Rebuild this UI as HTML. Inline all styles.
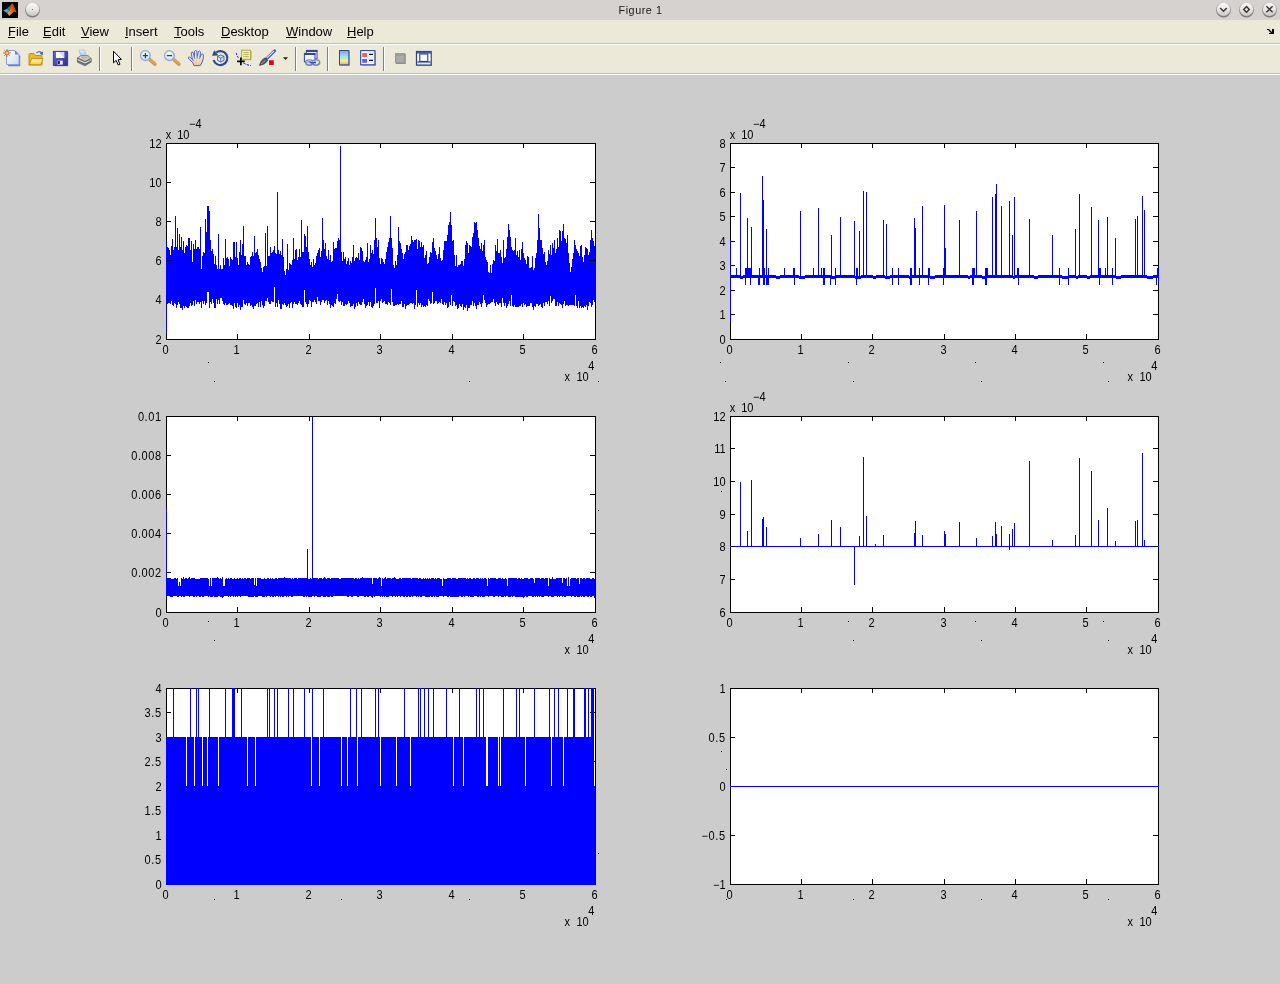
<!DOCTYPE html>
<html><head><meta charset="utf-8"><title>Figure 1</title>
<style>
html,body{margin:0;padding:0;}
body{width:1280px;height:984px;background:#cccccc;overflow:hidden;position:relative;font-family:"Liberation Sans",sans-serif;}
svg.plots{position:absolute;left:0;top:0;}
svg.plots text{font-family:"Liberation Sans",sans-serif;}
#titlebar{position:absolute;left:0;top:0;width:1280px;height:20px;background:#d6d2d0;}
#menubar{position:absolute;left:0;top:20px;width:1280px;height:23px;background:#ece9d8;}
#sep1{position:absolute;left:0;top:43px;width:1280px;height:1px;background:#c3c2b1;}
#sep1b{position:absolute;left:0;top:44px;width:1280px;height:1px;background:#ffffff;}
#toolbar{position:absolute;left:0;top:45px;width:1280px;height:28px;background:#ece9d8;}
#sep2{position:absolute;left:0;top:73px;width:1280px;height:1px;background:#c3c2b1;}
#sep2b{position:absolute;left:0;top:74px;width:1280px;height:1px;background:#ffffff;}
svg.icons{position:absolute;left:0;top:0;}

</style></head>
<body>
<svg class="plots" width="1280" height="984" viewBox="0 0 1280 984" shape-rendering="crispEdges"><rect x="166" y="143" width="430" height="197" fill="#fff"/><rect x="167" y="247" width="1" height="57" fill="#0000ff"/><rect x="168" y="248" width="1" height="55" fill="#0000ff"/><rect x="169" y="250" width="1" height="53" fill="#0000ff"/><rect x="170" y="255" width="1" height="49" fill="#0000ff"/><rect x="171" y="246" width="1" height="55" fill="#0000ff"/><rect x="172" y="239" width="1" height="66" fill="#0000ff"/><rect x="173" y="250" width="1" height="56" fill="#0000ff"/><rect x="174" y="247" width="1" height="56" fill="#0000ff"/><rect x="175" y="216" width="1" height="88" fill="#0000ff"/><rect x="176" y="247" width="1" height="61" fill="#0000ff"/><rect x="177" y="228" width="1" height="77" fill="#0000ff"/><rect x="178" y="250" width="1" height="52" fill="#0000ff"/><rect x="179" y="234" width="1" height="70" fill="#0000ff"/><rect x="180" y="247" width="1" height="61" fill="#0000ff"/><rect x="181" y="237" width="1" height="71" fill="#0000ff"/><rect x="182" y="250" width="1" height="60" fill="#0000ff"/><rect x="183" y="241" width="1" height="65" fill="#0000ff"/><rect x="184" y="253" width="1" height="55" fill="#0000ff"/><rect x="185" y="247" width="1" height="59" fill="#0000ff"/><rect x="186" y="245" width="1" height="62" fill="#0000ff"/><rect x="187" y="246" width="1" height="62" fill="#0000ff"/><rect x="188" y="238" width="1" height="70" fill="#0000ff"/><rect x="189" y="238" width="1" height="68" fill="#0000ff"/><rect x="190" y="250" width="1" height="53" fill="#0000ff"/><rect x="191" y="241" width="1" height="65" fill="#0000ff"/><rect x="192" y="262" width="1" height="43" fill="#0000ff"/><rect x="193" y="244" width="1" height="57" fill="#0000ff"/><rect x="194" y="249" width="1" height="57" fill="#0000ff"/><rect x="195" y="240" width="1" height="60" fill="#0000ff"/><rect x="196" y="249" width="1" height="55" fill="#0000ff"/><rect x="197" y="247" width="1" height="55" fill="#0000ff"/><rect x="198" y="247" width="1" height="55" fill="#0000ff"/><rect x="199" y="249" width="1" height="55" fill="#0000ff"/><rect x="200" y="227" width="1" height="75" fill="#0000ff"/><rect x="201" y="269" width="1" height="39" fill="#0000ff"/><rect x="202" y="256" width="1" height="45" fill="#0000ff"/><rect x="203" y="252" width="1" height="52" fill="#0000ff"/><rect x="204" y="253" width="1" height="48" fill="#0000ff"/><rect x="205" y="219" width="1" height="86" fill="#0000ff"/><rect x="206" y="232" width="1" height="71" fill="#0000ff"/><rect x="207" y="206" width="1" height="86" fill="#0000ff"/><rect x="208" y="206" width="1" height="86" fill="#0000ff"/><rect x="209" y="211" width="1" height="97" fill="#0000ff"/><rect x="210" y="240" width="1" height="62" fill="#0000ff"/><rect x="211" y="251" width="1" height="53" fill="#0000ff"/><rect x="212" y="249" width="1" height="50" fill="#0000ff"/><rect x="213" y="254" width="1" height="49" fill="#0000ff"/><rect x="214" y="264" width="1" height="44" fill="#0000ff"/><rect x="215" y="256" width="1" height="52" fill="#0000ff"/><rect x="216" y="265" width="1" height="34" fill="#0000ff"/><rect x="217" y="269" width="1" height="35" fill="#0000ff"/><rect x="218" y="234" width="1" height="66" fill="#0000ff"/><rect x="219" y="269" width="1" height="35" fill="#0000ff"/><rect x="220" y="265" width="1" height="33" fill="#0000ff"/><rect x="221" y="269" width="1" height="29" fill="#0000ff"/><rect x="222" y="269" width="1" height="32" fill="#0000ff"/><rect x="223" y="258" width="1" height="46" fill="#0000ff"/><rect x="224" y="265" width="1" height="40" fill="#0000ff"/><rect x="225" y="239" width="1" height="64" fill="#0000ff"/><rect x="226" y="258" width="1" height="47" fill="#0000ff"/><rect x="227" y="257" width="1" height="48" fill="#0000ff"/><rect x="228" y="259" width="1" height="45" fill="#0000ff"/><rect x="229" y="266" width="1" height="37" fill="#0000ff"/><rect x="230" y="257" width="1" height="48" fill="#0000ff"/><rect x="231" y="259" width="1" height="46" fill="#0000ff"/><rect x="232" y="260" width="1" height="46" fill="#0000ff"/><rect x="233" y="242" width="1" height="67" fill="#0000ff"/><rect x="234" y="242" width="1" height="61" fill="#0000ff"/><rect x="235" y="257" width="1" height="50" fill="#0000ff"/><rect x="236" y="242" width="1" height="66" fill="#0000ff"/><rect x="237" y="258" width="1" height="45" fill="#0000ff"/><rect x="238" y="265" width="1" height="42" fill="#0000ff"/><rect x="239" y="252" width="1" height="53" fill="#0000ff"/><rect x="240" y="240" width="1" height="70" fill="#0000ff"/><rect x="241" y="255" width="1" height="52" fill="#0000ff"/><rect x="242" y="244" width="1" height="63" fill="#0000ff"/><rect x="243" y="226" width="1" height="74" fill="#0000ff"/><rect x="244" y="256" width="1" height="48" fill="#0000ff"/><rect x="245" y="256" width="1" height="49" fill="#0000ff"/><rect x="246" y="265" width="1" height="38" fill="#0000ff"/><rect x="247" y="262" width="1" height="44" fill="#0000ff"/><rect x="248" y="264" width="1" height="39" fill="#0000ff"/><rect x="249" y="265" width="1" height="38" fill="#0000ff"/><rect x="250" y="257" width="1" height="49" fill="#0000ff"/><rect x="251" y="256" width="1" height="49" fill="#0000ff"/><rect x="252" y="252" width="1" height="55" fill="#0000ff"/><rect x="253" y="256" width="1" height="53" fill="#0000ff"/><rect x="254" y="236" width="1" height="70" fill="#0000ff"/><rect x="255" y="253" width="1" height="53" fill="#0000ff"/><rect x="256" y="252" width="1" height="52" fill="#0000ff"/><rect x="257" y="249" width="1" height="54" fill="#0000ff"/><rect x="258" y="255" width="1" height="52" fill="#0000ff"/><rect x="259" y="259" width="1" height="43" fill="#0000ff"/><rect x="260" y="262" width="1" height="45" fill="#0000ff"/><rect x="261" y="268" width="1" height="33" fill="#0000ff"/><rect x="262" y="272" width="1" height="33" fill="#0000ff"/><rect x="263" y="267" width="1" height="41" fill="#0000ff"/><rect x="264" y="266" width="1" height="40" fill="#0000ff"/><rect x="265" y="233" width="1" height="68" fill="#0000ff"/><rect x="266" y="266" width="1" height="35" fill="#0000ff"/><rect x="267" y="226" width="1" height="72" fill="#0000ff"/><rect x="268" y="256" width="1" height="46" fill="#0000ff"/><rect x="269" y="256" width="1" height="48" fill="#0000ff"/><rect x="270" y="247" width="1" height="57" fill="#0000ff"/><rect x="271" y="253" width="1" height="48" fill="#0000ff"/><rect x="272" y="252" width="1" height="50" fill="#0000ff"/><rect x="273" y="250" width="1" height="52" fill="#0000ff"/><rect x="274" y="246" width="1" height="41" fill="#0000ff"/><rect x="275" y="253" width="1" height="54" fill="#0000ff"/><rect x="276" y="254" width="1" height="49" fill="#0000ff"/><rect x="277" y="192" width="1" height="115" fill="#0000ff"/><rect x="278" y="250" width="1" height="50" fill="#0000ff"/><rect x="279" y="254" width="1" height="50" fill="#0000ff"/><rect x="280" y="251" width="1" height="58" fill="#0000ff"/><rect x="281" y="255" width="1" height="54" fill="#0000ff"/><rect x="282" y="239" width="1" height="65" fill="#0000ff"/><rect x="283" y="257" width="1" height="48" fill="#0000ff"/><rect x="284" y="271" width="1" height="32" fill="#0000ff"/><rect x="285" y="275" width="1" height="30" fill="#0000ff"/><rect x="286" y="269" width="1" height="38" fill="#0000ff"/><rect x="287" y="244" width="1" height="62" fill="#0000ff"/><rect x="288" y="270" width="1" height="34" fill="#0000ff"/><rect x="289" y="263" width="1" height="45" fill="#0000ff"/><rect x="290" y="264" width="1" height="39" fill="#0000ff"/><rect x="291" y="265" width="1" height="37" fill="#0000ff"/><rect x="292" y="260" width="1" height="48" fill="#0000ff"/><rect x="293" y="238" width="1" height="66" fill="#0000ff"/><rect x="294" y="259" width="1" height="43" fill="#0000ff"/><rect x="295" y="250" width="1" height="54" fill="#0000ff"/><rect x="296" y="249" width="1" height="55" fill="#0000ff"/><rect x="297" y="260" width="1" height="45" fill="#0000ff"/><rect x="298" y="257" width="1" height="46" fill="#0000ff"/><rect x="299" y="249" width="1" height="52" fill="#0000ff"/><rect x="300" y="257" width="1" height="47" fill="#0000ff"/><rect x="301" y="220" width="1" height="85" fill="#0000ff"/><rect x="302" y="252" width="1" height="55" fill="#0000ff"/><rect x="303" y="252" width="1" height="55" fill="#0000ff"/><rect x="304" y="234" width="1" height="56" fill="#0000ff"/><rect x="305" y="236" width="1" height="66" fill="#0000ff"/><rect x="306" y="247" width="1" height="57" fill="#0000ff"/><rect x="307" y="226" width="1" height="81" fill="#0000ff"/><rect x="308" y="252" width="1" height="52" fill="#0000ff"/><rect x="309" y="259" width="1" height="41" fill="#0000ff"/><rect x="310" y="265" width="1" height="36" fill="#0000ff"/><rect x="311" y="262" width="1" height="45" fill="#0000ff"/><rect x="312" y="267" width="1" height="35" fill="#0000ff"/><rect x="313" y="259" width="1" height="43" fill="#0000ff"/><rect x="314" y="265" width="1" height="35" fill="#0000ff"/><rect x="315" y="263" width="1" height="39" fill="#0000ff"/><rect x="316" y="256" width="1" height="48" fill="#0000ff"/><rect x="317" y="253" width="1" height="44" fill="#0000ff"/><rect x="318" y="250" width="1" height="51" fill="#0000ff"/><rect x="319" y="248" width="1" height="53" fill="#0000ff"/><rect x="320" y="257" width="1" height="48" fill="#0000ff"/><rect x="321" y="251" width="1" height="51" fill="#0000ff"/><rect x="322" y="218" width="1" height="82" fill="#0000ff"/><rect x="323" y="240" width="1" height="60" fill="#0000ff"/><rect x="324" y="249" width="1" height="54" fill="#0000ff"/><rect x="325" y="243" width="1" height="58" fill="#0000ff"/><rect x="326" y="256" width="1" height="44" fill="#0000ff"/><rect x="327" y="259" width="1" height="46" fill="#0000ff"/><rect x="328" y="250" width="1" height="51" fill="#0000ff"/><rect x="329" y="260" width="1" height="44" fill="#0000ff"/><rect x="330" y="255" width="1" height="53" fill="#0000ff"/><rect x="331" y="262" width="1" height="43" fill="#0000ff"/><rect x="332" y="261" width="1" height="45" fill="#0000ff"/><rect x="333" y="242" width="1" height="65" fill="#0000ff"/><rect x="334" y="249" width="1" height="54" fill="#0000ff"/><rect x="335" y="248" width="1" height="56" fill="#0000ff"/><rect x="336" y="248" width="1" height="51" fill="#0000ff"/><rect x="337" y="241" width="1" height="53" fill="#0000ff"/><rect x="338" y="238" width="1" height="63" fill="#0000ff"/><rect x="339" y="240" width="1" height="62" fill="#0000ff"/><rect x="340" y="146" width="1" height="155" fill="#0000ff"/><rect x="341" y="252" width="1" height="53" fill="#0000ff"/><rect x="342" y="261" width="1" height="41" fill="#0000ff"/><rect x="343" y="252" width="1" height="54" fill="#0000ff"/><rect x="344" y="259" width="1" height="47" fill="#0000ff"/><rect x="345" y="257" width="1" height="47" fill="#0000ff"/><rect x="346" y="264" width="1" height="41" fill="#0000ff"/><rect x="347" y="261" width="1" height="43" fill="#0000ff"/><rect x="348" y="258" width="1" height="43" fill="#0000ff"/><rect x="349" y="265" width="1" height="38" fill="#0000ff"/><rect x="350" y="261" width="1" height="46" fill="#0000ff"/><rect x="351" y="263" width="1" height="43" fill="#0000ff"/><rect x="352" y="257" width="1" height="49" fill="#0000ff"/><rect x="353" y="245" width="1" height="59" fill="#0000ff"/><rect x="354" y="261" width="1" height="48" fill="#0000ff"/><rect x="355" y="258" width="1" height="49" fill="#0000ff"/><rect x="356" y="257" width="1" height="46" fill="#0000ff"/><rect x="357" y="258" width="1" height="48" fill="#0000ff"/><rect x="358" y="253" width="1" height="49" fill="#0000ff"/><rect x="359" y="260" width="1" height="44" fill="#0000ff"/><rect x="360" y="247" width="1" height="58" fill="#0000ff"/><rect x="361" y="248" width="1" height="57" fill="#0000ff"/><rect x="362" y="251" width="1" height="51" fill="#0000ff"/><rect x="363" y="261" width="1" height="38" fill="#0000ff"/><rect x="364" y="262" width="1" height="42" fill="#0000ff"/><rect x="365" y="260" width="1" height="48" fill="#0000ff"/><rect x="366" y="257" width="1" height="49" fill="#0000ff"/><rect x="367" y="243" width="1" height="62" fill="#0000ff"/><rect x="368" y="262" width="1" height="40" fill="#0000ff"/><rect x="369" y="259" width="1" height="47" fill="#0000ff"/><rect x="370" y="245" width="1" height="57" fill="#0000ff"/><rect x="371" y="253" width="1" height="54" fill="#0000ff"/><rect x="372" y="250" width="1" height="58" fill="#0000ff"/><rect x="373" y="254" width="1" height="52" fill="#0000ff"/><rect x="374" y="240" width="1" height="64" fill="#0000ff"/><rect x="375" y="218" width="1" height="70" fill="#0000ff"/><rect x="376" y="238" width="1" height="65" fill="#0000ff"/><rect x="377" y="247" width="1" height="56" fill="#0000ff"/><rect x="378" y="240" width="1" height="61" fill="#0000ff"/><rect x="379" y="258" width="1" height="50" fill="#0000ff"/><rect x="380" y="264" width="1" height="37" fill="#0000ff"/><rect x="381" y="258" width="1" height="41" fill="#0000ff"/><rect x="382" y="259" width="1" height="44" fill="#0000ff"/><rect x="383" y="262" width="1" height="40" fill="#0000ff"/><rect x="384" y="264" width="1" height="37" fill="#0000ff"/><rect x="385" y="259" width="1" height="45" fill="#0000ff"/><rect x="386" y="252" width="1" height="52" fill="#0000ff"/><rect x="387" y="247" width="1" height="58" fill="#0000ff"/><rect x="388" y="242" width="1" height="60" fill="#0000ff"/><rect x="389" y="238" width="1" height="65" fill="#0000ff"/><rect x="390" y="216" width="1" height="89" fill="#0000ff"/><rect x="391" y="238" width="1" height="51" fill="#0000ff"/><rect x="392" y="248" width="1" height="54" fill="#0000ff"/><rect x="393" y="265" width="1" height="41" fill="#0000ff"/><rect x="394" y="268" width="1" height="38" fill="#0000ff"/><rect x="395" y="261" width="1" height="44" fill="#0000ff"/><rect x="396" y="265" width="1" height="40" fill="#0000ff"/><rect x="397" y="255" width="1" height="49" fill="#0000ff"/><rect x="398" y="227" width="1" height="78" fill="#0000ff"/><rect x="399" y="241" width="1" height="63" fill="#0000ff"/><rect x="400" y="243" width="1" height="61" fill="#0000ff"/><rect x="401" y="249" width="1" height="52" fill="#0000ff"/><rect x="402" y="253" width="1" height="54" fill="#0000ff"/><rect x="403" y="259" width="1" height="48" fill="#0000ff"/><rect x="404" y="254" width="1" height="50" fill="#0000ff"/><rect x="405" y="252" width="1" height="57" fill="#0000ff"/><rect x="406" y="245" width="1" height="61" fill="#0000ff"/><rect x="407" y="245" width="1" height="60" fill="#0000ff"/><rect x="408" y="250" width="1" height="55" fill="#0000ff"/><rect x="409" y="246" width="1" height="58" fill="#0000ff"/><rect x="410" y="244" width="1" height="59" fill="#0000ff"/><rect x="411" y="236" width="1" height="67" fill="#0000ff"/><rect x="412" y="240" width="1" height="64" fill="#0000ff"/><rect x="413" y="242" width="1" height="61" fill="#0000ff"/><rect x="414" y="240" width="1" height="69" fill="#0000ff"/><rect x="415" y="240" width="1" height="65" fill="#0000ff"/><rect x="416" y="239" width="1" height="51" fill="#0000ff"/><rect x="417" y="249" width="1" height="58" fill="#0000ff"/><rect x="418" y="240" width="1" height="63" fill="#0000ff"/><rect x="419" y="241" width="1" height="64" fill="#0000ff"/><rect x="420" y="247" width="1" height="56" fill="#0000ff"/><rect x="421" y="242" width="1" height="65" fill="#0000ff"/><rect x="422" y="247" width="1" height="58" fill="#0000ff"/><rect x="423" y="245" width="1" height="62" fill="#0000ff"/><rect x="424" y="258" width="1" height="48" fill="#0000ff"/><rect x="425" y="255" width="1" height="52" fill="#0000ff"/><rect x="426" y="251" width="1" height="54" fill="#0000ff"/><rect x="427" y="264" width="1" height="42" fill="#0000ff"/><rect x="428" y="263" width="1" height="36" fill="#0000ff"/><rect x="429" y="257" width="1" height="44" fill="#0000ff"/><rect x="430" y="252" width="1" height="52" fill="#0000ff"/><rect x="431" y="253" width="1" height="50" fill="#0000ff"/><rect x="432" y="242" width="1" height="50" fill="#0000ff"/><rect x="433" y="238" width="1" height="66" fill="#0000ff"/><rect x="434" y="248" width="1" height="55" fill="#0000ff"/><rect x="435" y="251" width="1" height="50" fill="#0000ff"/><rect x="436" y="255" width="1" height="46" fill="#0000ff"/><rect x="437" y="259" width="1" height="45" fill="#0000ff"/><rect x="438" y="254" width="1" height="49" fill="#0000ff"/><rect x="439" y="247" width="1" height="55" fill="#0000ff"/><rect x="440" y="258" width="1" height="45" fill="#0000ff"/><rect x="441" y="261" width="1" height="38" fill="#0000ff"/><rect x="442" y="260" width="1" height="44" fill="#0000ff"/><rect x="443" y="250" width="1" height="55" fill="#0000ff"/><rect x="444" y="241" width="1" height="61" fill="#0000ff"/><rect x="445" y="241" width="1" height="64" fill="#0000ff"/><rect x="446" y="241" width="1" height="62" fill="#0000ff"/><rect x="447" y="235" width="1" height="73" fill="#0000ff"/><rect x="448" y="225" width="1" height="82" fill="#0000ff"/><rect x="449" y="222" width="1" height="80" fill="#0000ff"/><rect x="450" y="212" width="1" height="93" fill="#0000ff"/><rect x="451" y="225" width="1" height="70" fill="#0000ff"/><rect x="452" y="241" width="1" height="65" fill="#0000ff"/><rect x="453" y="240" width="1" height="61" fill="#0000ff"/><rect x="454" y="255" width="1" height="47" fill="#0000ff"/><rect x="455" y="266" width="1" height="40" fill="#0000ff"/><rect x="456" y="255" width="1" height="50" fill="#0000ff"/><rect x="457" y="267" width="1" height="42" fill="#0000ff"/><rect x="458" y="265" width="1" height="43" fill="#0000ff"/><rect x="459" y="265" width="1" height="39" fill="#0000ff"/><rect x="460" y="264" width="1" height="42" fill="#0000ff"/><rect x="461" y="261" width="1" height="46" fill="#0000ff"/><rect x="462" y="261" width="1" height="43" fill="#0000ff"/><rect x="463" y="266" width="1" height="44" fill="#0000ff"/><rect x="464" y="259" width="1" height="48" fill="#0000ff"/><rect x="465" y="245" width="1" height="63" fill="#0000ff"/><rect x="466" y="241" width="1" height="64" fill="#0000ff"/><rect x="467" y="243" width="1" height="68" fill="#0000ff"/><rect x="468" y="253" width="1" height="55" fill="#0000ff"/><rect x="469" y="245" width="1" height="63" fill="#0000ff"/><rect x="470" y="246" width="1" height="59" fill="#0000ff"/><rect x="471" y="247" width="1" height="58" fill="#0000ff"/><rect x="472" y="237" width="1" height="64" fill="#0000ff"/><rect x="473" y="233" width="1" height="73" fill="#0000ff"/><rect x="474" y="222" width="1" height="81" fill="#0000ff"/><rect x="475" y="223" width="1" height="83" fill="#0000ff"/><rect x="476" y="222" width="1" height="87" fill="#0000ff"/><rect x="477" y="230" width="1" height="75" fill="#0000ff"/><rect x="478" y="238" width="1" height="67" fill="#0000ff"/><rect x="479" y="246" width="1" height="56" fill="#0000ff"/><rect x="480" y="249" width="1" height="55" fill="#0000ff"/><rect x="481" y="243" width="1" height="64" fill="#0000ff"/><rect x="482" y="251" width="1" height="52" fill="#0000ff"/><rect x="483" y="245" width="1" height="50" fill="#0000ff"/><rect x="484" y="240" width="1" height="60" fill="#0000ff"/><rect x="485" y="257" width="1" height="46" fill="#0000ff"/><rect x="486" y="260" width="1" height="47" fill="#0000ff"/><rect x="487" y="262" width="1" height="43" fill="#0000ff"/><rect x="488" y="272" width="1" height="32" fill="#0000ff"/><rect x="489" y="273" width="1" height="31" fill="#0000ff"/><rect x="490" y="265" width="1" height="38" fill="#0000ff"/><rect x="491" y="273" width="1" height="29" fill="#0000ff"/><rect x="492" y="264" width="1" height="38" fill="#0000ff"/><rect x="493" y="260" width="1" height="39" fill="#0000ff"/><rect x="494" y="261" width="1" height="42" fill="#0000ff"/><rect x="495" y="245" width="1" height="61" fill="#0000ff"/><rect x="496" y="251" width="1" height="51" fill="#0000ff"/><rect x="497" y="239" width="1" height="65" fill="#0000ff"/><rect x="498" y="253" width="1" height="52" fill="#0000ff"/><rect x="499" y="253" width="1" height="50" fill="#0000ff"/><rect x="500" y="250" width="1" height="53" fill="#0000ff"/><rect x="501" y="257" width="1" height="50" fill="#0000ff"/><rect x="502" y="263" width="1" height="35" fill="#0000ff"/><rect x="503" y="240" width="1" height="63" fill="#0000ff"/><rect x="504" y="258" width="1" height="48" fill="#0000ff"/><rect x="505" y="257" width="1" height="46" fill="#0000ff"/><rect x="506" y="249" width="1" height="59" fill="#0000ff"/><rect x="507" y="237" width="1" height="69" fill="#0000ff"/><rect x="508" y="224" width="1" height="80" fill="#0000ff"/><rect x="509" y="230" width="1" height="71" fill="#0000ff"/><rect x="510" y="237" width="1" height="69" fill="#0000ff"/><rect x="511" y="247" width="1" height="48" fill="#0000ff"/><rect x="512" y="250" width="1" height="56" fill="#0000ff"/><rect x="513" y="251" width="1" height="56" fill="#0000ff"/><rect x="514" y="250" width="1" height="55" fill="#0000ff"/><rect x="515" y="238" width="1" height="69" fill="#0000ff"/><rect x="516" y="255" width="1" height="52" fill="#0000ff"/><rect x="517" y="251" width="1" height="56" fill="#0000ff"/><rect x="518" y="257" width="1" height="50" fill="#0000ff"/><rect x="519" y="250" width="1" height="56" fill="#0000ff"/><rect x="520" y="260" width="1" height="46" fill="#0000ff"/><rect x="521" y="249" width="1" height="55" fill="#0000ff"/><rect x="522" y="242" width="1" height="65" fill="#0000ff"/><rect x="523" y="253" width="1" height="50" fill="#0000ff"/><rect x="524" y="258" width="1" height="47" fill="#0000ff"/><rect x="525" y="260" width="1" height="44" fill="#0000ff"/><rect x="526" y="264" width="1" height="43" fill="#0000ff"/><rect x="527" y="256" width="1" height="50" fill="#0000ff"/><rect x="528" y="257" width="1" height="49" fill="#0000ff"/><rect x="529" y="268" width="1" height="38" fill="#0000ff"/><rect x="530" y="268" width="1" height="35" fill="#0000ff"/><rect x="531" y="267" width="1" height="36" fill="#0000ff"/><rect x="532" y="256" width="1" height="51" fill="#0000ff"/><rect x="533" y="270" width="1" height="40" fill="#0000ff"/><rect x="534" y="268" width="1" height="38" fill="#0000ff"/><rect x="535" y="258" width="1" height="49" fill="#0000ff"/><rect x="536" y="253" width="1" height="51" fill="#0000ff"/><rect x="537" y="240" width="1" height="64" fill="#0000ff"/><rect x="538" y="214" width="1" height="92" fill="#0000ff"/><rect x="539" y="228" width="1" height="77" fill="#0000ff"/><rect x="540" y="240" width="1" height="64" fill="#0000ff"/><rect x="541" y="240" width="1" height="67" fill="#0000ff"/><rect x="542" y="248" width="1" height="60" fill="#0000ff"/><rect x="543" y="254" width="1" height="49" fill="#0000ff"/><rect x="544" y="252" width="1" height="54" fill="#0000ff"/><rect x="545" y="262" width="1" height="40" fill="#0000ff"/><rect x="546" y="265" width="1" height="37" fill="#0000ff"/><rect x="547" y="261" width="1" height="43" fill="#0000ff"/><rect x="548" y="250" width="1" height="51" fill="#0000ff"/><rect x="549" y="254" width="1" height="52" fill="#0000ff"/><rect x="550" y="245" width="1" height="51" fill="#0000ff"/><rect x="551" y="255" width="1" height="48" fill="#0000ff"/><rect x="552" y="243" width="1" height="58" fill="#0000ff"/><rect x="553" y="248" width="1" height="51" fill="#0000ff"/><rect x="554" y="240" width="1" height="59" fill="#0000ff"/><rect x="555" y="253" width="1" height="53" fill="#0000ff"/><rect x="556" y="249" width="1" height="57" fill="#0000ff"/><rect x="557" y="238" width="1" height="64" fill="#0000ff"/><rect x="558" y="247" width="1" height="59" fill="#0000ff"/><rect x="559" y="230" width="1" height="73" fill="#0000ff"/><rect x="560" y="231" width="1" height="73" fill="#0000ff"/><rect x="561" y="241" width="1" height="64" fill="#0000ff"/><rect x="562" y="231" width="1" height="77" fill="#0000ff"/><rect x="563" y="224" width="1" height="80" fill="#0000ff"/><rect x="564" y="238" width="1" height="63" fill="#0000ff"/><rect x="565" y="239" width="1" height="67" fill="#0000ff"/><rect x="566" y="243" width="1" height="62" fill="#0000ff"/><rect x="567" y="235" width="1" height="70" fill="#0000ff"/><rect x="568" y="253" width="1" height="53" fill="#0000ff"/><rect x="569" y="263" width="1" height="42" fill="#0000ff"/><rect x="570" y="272" width="1" height="33" fill="#0000ff"/><rect x="571" y="267" width="1" height="38" fill="#0000ff"/><rect x="572" y="259" width="1" height="46" fill="#0000ff"/><rect x="573" y="253" width="1" height="52" fill="#0000ff"/><rect x="574" y="240" width="1" height="66" fill="#0000ff"/><rect x="575" y="245" width="1" height="50" fill="#0000ff"/><rect x="576" y="249" width="1" height="57" fill="#0000ff"/><rect x="577" y="251" width="1" height="57" fill="#0000ff"/><rect x="578" y="253" width="1" height="48" fill="#0000ff"/><rect x="579" y="256" width="1" height="52" fill="#0000ff"/><rect x="580" y="246" width="1" height="60" fill="#0000ff"/><rect x="581" y="245" width="1" height="63" fill="#0000ff"/><rect x="582" y="257" width="1" height="50" fill="#0000ff"/><rect x="583" y="262" width="1" height="46" fill="#0000ff"/><rect x="584" y="255" width="1" height="51" fill="#0000ff"/><rect x="585" y="247" width="1" height="60" fill="#0000ff"/><rect x="586" y="248" width="1" height="57" fill="#0000ff"/><rect x="587" y="249" width="1" height="61" fill="#0000ff"/><rect x="588" y="255" width="1" height="51" fill="#0000ff"/><rect x="589" y="252" width="1" height="50" fill="#0000ff"/><rect x="590" y="240" width="1" height="63" fill="#0000ff"/><rect x="591" y="230" width="1" height="77" fill="#0000ff"/><rect x="592" y="238" width="1" height="67" fill="#0000ff"/><rect x="593" y="241" width="1" height="59" fill="#0000ff"/><rect x="594" y="246" width="1" height="56" fill="#0000ff"/><rect x="166" y="143" width="430" height="1" fill="#000"/><rect x="166" y="339" width="430" height="1" fill="#000"/><rect x="166" y="143" width="1" height="197" fill="#000"/><rect x="595" y="143" width="1" height="197" fill="#000"/><rect x="237" y="334" width="1" height="5" fill="#000"/><rect x="237" y="144" width="1" height="4" fill="#000"/><rect x="309" y="334" width="1" height="5" fill="#000"/><rect x="309" y="144" width="1" height="4" fill="#000"/><rect x="380" y="334" width="1" height="5" fill="#000"/><rect x="380" y="144" width="1" height="4" fill="#000"/><rect x="452" y="334" width="1" height="5" fill="#000"/><rect x="452" y="144" width="1" height="4" fill="#000"/><rect x="523" y="334" width="1" height="5" fill="#000"/><rect x="523" y="144" width="1" height="4" fill="#000"/><rect x="167" y="299" width="4" height="1" fill="#000"/><rect x="590" y="299" width="5" height="1" fill="#000"/><rect x="167" y="260" width="4" height="1" fill="#000"/><rect x="590" y="260" width="5" height="1" fill="#000"/><rect x="167" y="221" width="4" height="1" fill="#000"/><rect x="590" y="221" width="5" height="1" fill="#000"/><rect x="167" y="182" width="4" height="1" fill="#000"/><rect x="590" y="182" width="5" height="1" fill="#000"/><rect x="166" y="242" width="1" height="92" fill="#0000ff"/><rect x="595" y="262" width="1" height="35" fill="#0000ff"/><rect x="730" y="143" width="429" height="197" fill="#fff"/><rect x="731" y="275" width="427" height="3" fill="#0000ff"/><rect x="740" y="275" width="3" height="1" fill="#fff"/><rect x="740" y="278" width="3" height="1" fill="#0000ff"/><rect x="776" y="275" width="4" height="1" fill="#fff"/><rect x="776" y="278" width="4" height="1" fill="#0000ff"/><rect x="799" y="275" width="6" height="1" fill="#fff"/><rect x="799" y="278" width="6" height="1" fill="#0000ff"/><rect x="831" y="275" width="4" height="1" fill="#fff"/><rect x="831" y="278" width="4" height="1" fill="#0000ff"/><rect x="855" y="275" width="6" height="1" fill="#fff"/><rect x="855" y="278" width="6" height="1" fill="#0000ff"/><rect x="873" y="275" width="3" height="1" fill="#fff"/><rect x="873" y="278" width="3" height="1" fill="#0000ff"/><rect x="885" y="275" width="5" height="1" fill="#fff"/><rect x="885" y="278" width="5" height="1" fill="#0000ff"/><rect x="909" y="275" width="2" height="1" fill="#fff"/><rect x="909" y="278" width="2" height="1" fill="#0000ff"/><rect x="930" y="275" width="5" height="1" fill="#fff"/><rect x="930" y="278" width="5" height="1" fill="#0000ff"/><rect x="968" y="275" width="2" height="1" fill="#fff"/><rect x="968" y="278" width="2" height="1" fill="#0000ff"/><rect x="982" y="275" width="4" height="1" fill="#fff"/><rect x="982" y="278" width="4" height="1" fill="#0000ff"/><rect x="1013" y="275" width="2" height="1" fill="#fff"/><rect x="1013" y="278" width="2" height="1" fill="#0000ff"/><rect x="1034" y="275" width="4" height="1" fill="#fff"/><rect x="1034" y="278" width="4" height="1" fill="#0000ff"/><rect x="1062" y="275" width="6" height="1" fill="#fff"/><rect x="1062" y="278" width="6" height="1" fill="#0000ff"/><rect x="1076" y="275" width="2" height="1" fill="#fff"/><rect x="1076" y="278" width="2" height="1" fill="#0000ff"/><rect x="1087" y="275" width="3" height="1" fill="#fff"/><rect x="1087" y="278" width="3" height="1" fill="#0000ff"/><rect x="1116" y="275" width="5" height="1" fill="#fff"/><rect x="1116" y="278" width="5" height="1" fill="#0000ff"/><rect x="1147" y="275" width="6" height="1" fill="#fff"/><rect x="1147" y="278" width="6" height="1" fill="#0000ff"/><rect x="740" y="193" width="1" height="85" fill="#0000ff"/><rect x="747" y="218" width="1" height="60" fill="#0000ff"/><rect x="751" y="227" width="1" height="51" fill="#0000ff"/><rect x="762" y="176" width="1" height="102" fill="#0000ff"/><rect x="763" y="200" width="1" height="78" fill="#0000ff"/><rect x="766" y="229" width="1" height="49" fill="#0000ff"/><rect x="800" y="211" width="1" height="67" fill="#0000ff"/><rect x="818" y="208" width="1" height="70" fill="#0000ff"/><rect x="831" y="235" width="1" height="43" fill="#0000ff"/><rect x="840" y="217" width="1" height="61" fill="#0000ff"/><rect x="854" y="221" width="1" height="57" fill="#0000ff"/><rect x="859" y="231" width="1" height="47" fill="#0000ff"/><rect x="863" y="191" width="1" height="87" fill="#0000ff"/><rect x="866" y="192" width="1" height="86" fill="#0000ff"/><rect x="883" y="220" width="1" height="58" fill="#0000ff"/><rect x="886" y="224" width="1" height="54" fill="#0000ff"/><rect x="914" y="218" width="1" height="60" fill="#0000ff"/><rect x="915" y="228" width="1" height="50" fill="#0000ff"/><rect x="922" y="206" width="1" height="72" fill="#0000ff"/><rect x="944" y="205" width="1" height="73" fill="#0000ff"/><rect x="945" y="248" width="1" height="30" fill="#0000ff"/><rect x="959" y="220" width="1" height="58" fill="#0000ff"/><rect x="976" y="211" width="1" height="67" fill="#0000ff"/><rect x="992" y="197" width="1" height="81" fill="#0000ff"/><rect x="995" y="194" width="1" height="84" fill="#0000ff"/><rect x="996" y="184" width="1" height="94" fill="#0000ff"/><rect x="1001" y="206" width="1" height="72" fill="#0000ff"/><rect x="1009" y="201" width="1" height="77" fill="#0000ff"/><rect x="1012" y="235" width="1" height="43" fill="#0000ff"/><rect x="1014" y="197" width="1" height="81" fill="#0000ff"/><rect x="1029" y="219" width="1" height="59" fill="#0000ff"/><rect x="1052" y="235" width="1" height="43" fill="#0000ff"/><rect x="1075" y="229" width="1" height="49" fill="#0000ff"/><rect x="1079" y="194" width="1" height="84" fill="#0000ff"/><rect x="1091" y="207" width="1" height="71" fill="#0000ff"/><rect x="1098" y="220" width="1" height="58" fill="#0000ff"/><rect x="1107" y="217" width="1" height="61" fill="#0000ff"/><rect x="1115" y="238" width="1" height="40" fill="#0000ff"/><rect x="1135" y="219" width="1" height="59" fill="#0000ff"/><rect x="1137" y="216" width="1" height="62" fill="#0000ff"/><rect x="1142" y="196" width="1" height="82" fill="#0000ff"/><rect x="1144" y="210" width="1" height="68" fill="#0000ff"/><rect x="736" y="268" width="1" height="10" fill="#0000ff"/><rect x="745" y="268" width="1" height="10" fill="#0000ff"/><rect x="746" y="268" width="1" height="10" fill="#0000ff"/><rect x="747" y="268" width="1" height="10" fill="#0000ff"/><rect x="748" y="268" width="1" height="10" fill="#0000ff"/><rect x="749" y="268" width="1" height="10" fill="#0000ff"/><rect x="750" y="268" width="1" height="10" fill="#0000ff"/><rect x="751" y="268" width="1" height="10" fill="#0000ff"/><rect x="759" y="268" width="1" height="10" fill="#0000ff"/><rect x="764" y="268" width="1" height="10" fill="#0000ff"/><rect x="768" y="268" width="1" height="10" fill="#0000ff"/><rect x="784" y="268" width="1" height="10" fill="#0000ff"/><rect x="793" y="268" width="1" height="10" fill="#0000ff"/><rect x="794" y="268" width="1" height="10" fill="#0000ff"/><rect x="813" y="268" width="1" height="10" fill="#0000ff"/><rect x="821" y="268" width="1" height="10" fill="#0000ff"/><rect x="823" y="268" width="1" height="10" fill="#0000ff"/><rect x="824" y="268" width="1" height="10" fill="#0000ff"/><rect x="835" y="268" width="1" height="10" fill="#0000ff"/><rect x="856" y="268" width="1" height="10" fill="#0000ff"/><rect x="857" y="268" width="1" height="10" fill="#0000ff"/><rect x="892" y="268" width="1" height="10" fill="#0000ff"/><rect x="898" y="268" width="1" height="10" fill="#0000ff"/><rect x="910" y="268" width="1" height="10" fill="#0000ff"/><rect x="911" y="268" width="1" height="10" fill="#0000ff"/><rect x="919" y="268" width="1" height="10" fill="#0000ff"/><rect x="928" y="268" width="1" height="10" fill="#0000ff"/><rect x="929" y="268" width="1" height="10" fill="#0000ff"/><rect x="943" y="268" width="1" height="10" fill="#0000ff"/><rect x="972" y="268" width="1" height="10" fill="#0000ff"/><rect x="973" y="268" width="1" height="10" fill="#0000ff"/><rect x="974" y="268" width="1" height="10" fill="#0000ff"/><rect x="985" y="268" width="1" height="10" fill="#0000ff"/><rect x="986" y="268" width="1" height="10" fill="#0000ff"/><rect x="987" y="268" width="1" height="10" fill="#0000ff"/><rect x="1017" y="268" width="1" height="10" fill="#0000ff"/><rect x="1018" y="268" width="1" height="10" fill="#0000ff"/><rect x="1059" y="268" width="1" height="10" fill="#0000ff"/><rect x="1068" y="268" width="1" height="10" fill="#0000ff"/><rect x="1099" y="268" width="1" height="10" fill="#0000ff"/><rect x="1100" y="268" width="1" height="10" fill="#0000ff"/><rect x="1105" y="268" width="1" height="10" fill="#0000ff"/><rect x="1112" y="268" width="1" height="10" fill="#0000ff"/><rect x="1157" y="268" width="1" height="10" fill="#0000ff"/><rect x="745" y="277" width="1" height="8" fill="#0000ff"/><rect x="750" y="277" width="1" height="8" fill="#0000ff"/><rect x="758" y="277" width="1" height="8" fill="#0000ff"/><rect x="759" y="277" width="1" height="8" fill="#0000ff"/><rect x="763" y="277" width="1" height="8" fill="#0000ff"/><rect x="764" y="277" width="1" height="8" fill="#0000ff"/><rect x="766" y="277" width="1" height="8" fill="#0000ff"/><rect x="767" y="277" width="1" height="8" fill="#0000ff"/><rect x="768" y="277" width="1" height="8" fill="#0000ff"/><rect x="794" y="277" width="1" height="8" fill="#0000ff"/><rect x="823" y="277" width="1" height="8" fill="#0000ff"/><rect x="824" y="277" width="1" height="8" fill="#0000ff"/><rect x="830" y="277" width="1" height="8" fill="#0000ff"/><rect x="835" y="277" width="1" height="8" fill="#0000ff"/><rect x="856" y="277" width="1" height="8" fill="#0000ff"/><rect x="892" y="277" width="1" height="8" fill="#0000ff"/><rect x="898" y="277" width="1" height="8" fill="#0000ff"/><rect x="910" y="277" width="1" height="8" fill="#0000ff"/><rect x="911" y="277" width="1" height="8" fill="#0000ff"/><rect x="919" y="277" width="1" height="8" fill="#0000ff"/><rect x="928" y="277" width="1" height="8" fill="#0000ff"/><rect x="943" y="277" width="1" height="8" fill="#0000ff"/><rect x="972" y="277" width="1" height="8" fill="#0000ff"/><rect x="973" y="277" width="1" height="8" fill="#0000ff"/><rect x="985" y="277" width="1" height="8" fill="#0000ff"/><rect x="986" y="277" width="1" height="8" fill="#0000ff"/><rect x="1018" y="277" width="1" height="8" fill="#0000ff"/><rect x="1059" y="277" width="1" height="8" fill="#0000ff"/><rect x="1068" y="277" width="1" height="8" fill="#0000ff"/><rect x="1099" y="277" width="1" height="8" fill="#0000ff"/><rect x="1112" y="277" width="1" height="8" fill="#0000ff"/><rect x="1156" y="277" width="1" height="8" fill="#0000ff"/><rect x="730" y="143" width="429" height="1" fill="#000"/><rect x="730" y="339" width="429" height="1" fill="#000"/><rect x="730" y="143" width="1" height="197" fill="#000"/><rect x="1158" y="143" width="1" height="197" fill="#000"/><rect x="801" y="334" width="1" height="5" fill="#000"/><rect x="801" y="144" width="1" height="4" fill="#000"/><rect x="872" y="334" width="1" height="5" fill="#000"/><rect x="872" y="144" width="1" height="4" fill="#000"/><rect x="944" y="334" width="1" height="5" fill="#000"/><rect x="944" y="144" width="1" height="4" fill="#000"/><rect x="1015" y="334" width="1" height="5" fill="#000"/><rect x="1015" y="144" width="1" height="4" fill="#000"/><rect x="1086" y="334" width="1" height="5" fill="#000"/><rect x="1086" y="144" width="1" height="4" fill="#000"/><rect x="731" y="314" width="4" height="1" fill="#000"/><rect x="1153" y="314" width="5" height="1" fill="#000"/><rect x="731" y="290" width="4" height="1" fill="#000"/><rect x="1153" y="290" width="5" height="1" fill="#000"/><rect x="731" y="265" width="4" height="1" fill="#000"/><rect x="1153" y="265" width="5" height="1" fill="#000"/><rect x="731" y="241" width="4" height="1" fill="#000"/><rect x="1153" y="241" width="5" height="1" fill="#000"/><rect x="731" y="216" width="4" height="1" fill="#000"/><rect x="1153" y="216" width="5" height="1" fill="#000"/><rect x="731" y="192" width="4" height="1" fill="#000"/><rect x="1153" y="192" width="5" height="1" fill="#000"/><rect x="731" y="167" width="4" height="1" fill="#000"/><rect x="1153" y="167" width="5" height="1" fill="#000"/><rect x="730" y="240" width="1" height="82" fill="#0000ff"/><rect x="1158" y="268" width="1" height="14" fill="#0000ff"/><rect x="166" y="416" width="430" height="197" fill="#fff"/><rect x="167" y="578" width="428" height="18" fill="#0000ff"/><rect x="170" y="595" width="1" height="2" fill="#0000ff"/><rect x="171" y="578" width="1" height="1" fill="#fff"/><rect x="171" y="595" width="1" height="2" fill="#0000ff"/><rect x="172" y="578" width="1" height="1" fill="#fff"/><rect x="172" y="595" width="1" height="2" fill="#0000ff"/><rect x="173" y="578" width="1" height="1" fill="#fff"/><rect x="176" y="578" width="1" height="1" fill="#fff"/><rect x="177" y="595" width="1" height="2" fill="#0000ff"/><rect x="178" y="595" width="1" height="2" fill="#0000ff"/><rect x="181" y="595" width="1" height="2" fill="#0000ff"/><rect x="182" y="578" width="1" height="1" fill="#fff"/><rect x="183" y="577" width="1" height="2" fill="#0000ff"/><rect x="183" y="595" width="1" height="2" fill="#0000ff"/><rect x="184" y="578" width="1" height="1" fill="#fff"/><rect x="184" y="595" width="1" height="2" fill="#0000ff"/><rect x="187" y="578" width="1" height="1" fill="#fff"/><rect x="189" y="577" width="1" height="2" fill="#0000ff"/><rect x="189" y="595" width="1" height="2" fill="#0000ff"/><rect x="190" y="578" width="1" height="1" fill="#fff"/><rect x="193" y="595" width="1" height="2" fill="#0000ff"/><rect x="194" y="595" width="1" height="2" fill="#0000ff"/><rect x="195" y="578" width="1" height="1" fill="#fff"/><rect x="196" y="578" width="1" height="1" fill="#fff"/><rect x="196" y="595" width="1" height="2" fill="#0000ff"/><rect x="197" y="578" width="1" height="1" fill="#fff"/><rect x="198" y="578" width="1" height="1" fill="#fff"/><rect x="199" y="578" width="1" height="1" fill="#fff"/><rect x="199" y="595" width="1" height="2" fill="#0000ff"/><rect x="200" y="595" width="1" height="2" fill="#0000ff"/><rect x="202" y="595" width="1" height="2" fill="#0000ff"/><rect x="203" y="595" width="1" height="2" fill="#0000ff"/><rect x="208" y="578" width="1" height="1" fill="#fff"/><rect x="208" y="595" width="1" height="2" fill="#0000ff"/><rect x="209" y="578" width="1" height="1" fill="#fff"/><rect x="210" y="595" width="1" height="2" fill="#0000ff"/><rect x="211" y="595" width="1" height="2" fill="#0000ff"/><rect x="212" y="595" width="1" height="2" fill="#0000ff"/><rect x="214" y="595" width="1" height="2" fill="#0000ff"/><rect x="215" y="595" width="1" height="2" fill="#0000ff"/><rect x="216" y="595" width="1" height="2" fill="#0000ff"/><rect x="217" y="577" width="1" height="2" fill="#0000ff"/><rect x="217" y="595" width="1" height="2" fill="#0000ff"/><rect x="219" y="578" width="1" height="1" fill="#fff"/><rect x="220" y="595" width="1" height="2" fill="#0000ff"/><rect x="221" y="578" width="1" height="1" fill="#fff"/><rect x="221" y="595" width="1" height="2" fill="#0000ff"/><rect x="222" y="577" width="1" height="2" fill="#0000ff"/><rect x="222" y="595" width="1" height="3" fill="#0000ff"/><rect x="223" y="595" width="1" height="2" fill="#0000ff"/><rect x="225" y="578" width="1" height="1" fill="#fff"/><rect x="227" y="578" width="1" height="1" fill="#fff"/><rect x="228" y="595" width="1" height="2" fill="#0000ff"/><rect x="229" y="578" width="1" height="1" fill="#fff"/><rect x="230" y="595" width="1" height="2" fill="#0000ff"/><rect x="232" y="578" width="1" height="1" fill="#fff"/><rect x="233" y="578" width="1" height="1" fill="#fff"/><rect x="233" y="595" width="1" height="2" fill="#0000ff"/><rect x="235" y="578" width="1" height="1" fill="#fff"/><rect x="235" y="595" width="1" height="2" fill="#0000ff"/><rect x="236" y="578" width="1" height="1" fill="#fff"/><rect x="237" y="595" width="1" height="2" fill="#0000ff"/><rect x="238" y="578" width="1" height="1" fill="#fff"/><rect x="240" y="595" width="1" height="2" fill="#0000ff"/><rect x="241" y="578" width="1" height="1" fill="#fff"/><rect x="243" y="578" width="1" height="1" fill="#fff"/><rect x="246" y="578" width="1" height="1" fill="#fff"/><rect x="248" y="595" width="1" height="2" fill="#0000ff"/><rect x="249" y="595" width="1" height="2" fill="#0000ff"/><rect x="250" y="578" width="1" height="1" fill="#fff"/><rect x="250" y="595" width="1" height="2" fill="#0000ff"/><rect x="251" y="595" width="1" height="2" fill="#0000ff"/><rect x="252" y="595" width="1" height="2" fill="#0000ff"/><rect x="253" y="595" width="1" height="2" fill="#0000ff"/><rect x="255" y="595" width="1" height="2" fill="#0000ff"/><rect x="256" y="595" width="1" height="2" fill="#0000ff"/><rect x="257" y="595" width="1" height="2" fill="#0000ff"/><rect x="261" y="578" width="1" height="1" fill="#fff"/><rect x="262" y="578" width="1" height="1" fill="#fff"/><rect x="262" y="595" width="1" height="2" fill="#0000ff"/><rect x="263" y="578" width="1" height="1" fill="#fff"/><rect x="263" y="595" width="1" height="2" fill="#0000ff"/><rect x="264" y="595" width="1" height="2" fill="#0000ff"/><rect x="265" y="578" width="1" height="1" fill="#fff"/><rect x="266" y="578" width="1" height="1" fill="#fff"/><rect x="266" y="595" width="1" height="2" fill="#0000ff"/><rect x="269" y="578" width="1" height="1" fill="#fff"/><rect x="270" y="595" width="1" height="2" fill="#0000ff"/><rect x="271" y="578" width="1" height="1" fill="#fff"/><rect x="272" y="595" width="1" height="2" fill="#0000ff"/><rect x="273" y="578" width="1" height="1" fill="#fff"/><rect x="273" y="595" width="1" height="2" fill="#0000ff"/><rect x="274" y="578" width="1" height="1" fill="#fff"/><rect x="275" y="595" width="1" height="2" fill="#0000ff"/><rect x="277" y="578" width="1" height="1" fill="#fff"/><rect x="278" y="595" width="1" height="2" fill="#0000ff"/><rect x="280" y="595" width="1" height="2" fill="#0000ff"/><rect x="282" y="595" width="1" height="2" fill="#0000ff"/><rect x="283" y="595" width="1" height="2" fill="#0000ff"/><rect x="284" y="577" width="1" height="2" fill="#0000ff"/><rect x="286" y="595" width="1" height="2" fill="#0000ff"/><rect x="288" y="595" width="1" height="2" fill="#0000ff"/><rect x="291" y="578" width="1" height="1" fill="#fff"/><rect x="291" y="595" width="1" height="2" fill="#0000ff"/><rect x="292" y="595" width="1" height="2" fill="#0000ff"/><rect x="293" y="578" width="1" height="1" fill="#fff"/><rect x="297" y="578" width="1" height="1" fill="#fff"/><rect x="303" y="595" width="1" height="2" fill="#0000ff"/><rect x="304" y="595" width="1" height="2" fill="#0000ff"/><rect x="306" y="595" width="1" height="2" fill="#0000ff"/><rect x="308" y="578" width="1" height="1" fill="#fff"/><rect x="308" y="595" width="1" height="2" fill="#0000ff"/><rect x="309" y="578" width="1" height="1" fill="#fff"/><rect x="309" y="595" width="1" height="2" fill="#0000ff"/><rect x="310" y="595" width="1" height="2" fill="#0000ff"/><rect x="311" y="578" width="1" height="1" fill="#fff"/><rect x="311" y="595" width="1" height="2" fill="#0000ff"/><rect x="314" y="595" width="1" height="2" fill="#0000ff"/><rect x="317" y="595" width="1" height="2" fill="#0000ff"/><rect x="318" y="578" width="1" height="1" fill="#fff"/><rect x="318" y="595" width="1" height="2" fill="#0000ff"/><rect x="319" y="595" width="1" height="2" fill="#0000ff"/><rect x="320" y="595" width="1" height="2" fill="#0000ff"/><rect x="322" y="578" width="1" height="1" fill="#fff"/><rect x="323" y="595" width="1" height="2" fill="#0000ff"/><rect x="324" y="577" width="1" height="2" fill="#0000ff"/><rect x="324" y="595" width="1" height="2" fill="#0000ff"/><rect x="325" y="595" width="1" height="2" fill="#0000ff"/><rect x="326" y="578" width="1" height="1" fill="#fff"/><rect x="327" y="595" width="1" height="2" fill="#0000ff"/><rect x="328" y="595" width="1" height="2" fill="#0000ff"/><rect x="329" y="595" width="1" height="2" fill="#0000ff"/><rect x="330" y="578" width="1" height="1" fill="#fff"/><rect x="331" y="595" width="1" height="2" fill="#0000ff"/><rect x="332" y="595" width="1" height="2" fill="#0000ff"/><rect x="339" y="578" width="1" height="1" fill="#fff"/><rect x="340" y="578" width="1" height="1" fill="#fff"/><rect x="347" y="595" width="1" height="2" fill="#0000ff"/><rect x="348" y="595" width="1" height="2" fill="#0000ff"/><rect x="351" y="595" width="1" height="2" fill="#0000ff"/><rect x="352" y="595" width="1" height="2" fill="#0000ff"/><rect x="354" y="578" width="1" height="1" fill="#fff"/><rect x="357" y="578" width="1" height="1" fill="#fff"/><rect x="357" y="595" width="1" height="2" fill="#0000ff"/><rect x="358" y="595" width="1" height="2" fill="#0000ff"/><rect x="359" y="578" width="1" height="1" fill="#fff"/><rect x="362" y="577" width="1" height="2" fill="#0000ff"/><rect x="364" y="595" width="1" height="2" fill="#0000ff"/><rect x="365" y="595" width="1" height="2" fill="#0000ff"/><rect x="367" y="595" width="1" height="2" fill="#0000ff"/><rect x="368" y="595" width="1" height="2" fill="#0000ff"/><rect x="371" y="595" width="1" height="2" fill="#0000ff"/><rect x="372" y="595" width="1" height="3" fill="#0000ff"/><rect x="374" y="595" width="1" height="2" fill="#0000ff"/><rect x="377" y="578" width="1" height="1" fill="#fff"/><rect x="379" y="577" width="1" height="2" fill="#0000ff"/><rect x="380" y="595" width="1" height="2" fill="#0000ff"/><rect x="382" y="595" width="1" height="2" fill="#0000ff"/><rect x="383" y="578" width="1" height="1" fill="#fff"/><rect x="384" y="595" width="1" height="2" fill="#0000ff"/><rect x="385" y="577" width="1" height="2" fill="#0000ff"/><rect x="386" y="578" width="1" height="1" fill="#fff"/><rect x="386" y="595" width="1" height="2" fill="#0000ff"/><rect x="387" y="595" width="1" height="2" fill="#0000ff"/><rect x="388" y="595" width="1" height="2" fill="#0000ff"/><rect x="391" y="578" width="1" height="1" fill="#fff"/><rect x="392" y="595" width="1" height="2" fill="#0000ff"/><rect x="394" y="577" width="1" height="2" fill="#0000ff"/><rect x="395" y="595" width="1" height="2" fill="#0000ff"/><rect x="396" y="578" width="1" height="1" fill="#fff"/><rect x="397" y="578" width="1" height="1" fill="#fff"/><rect x="397" y="595" width="1" height="2" fill="#0000ff"/><rect x="398" y="578" width="1" height="1" fill="#fff"/><rect x="400" y="595" width="1" height="2" fill="#0000ff"/><rect x="401" y="578" width="1" height="1" fill="#fff"/><rect x="403" y="595" width="1" height="2" fill="#0000ff"/><rect x="404" y="595" width="1" height="2" fill="#0000ff"/><rect x="406" y="595" width="1" height="2" fill="#0000ff"/><rect x="407" y="595" width="1" height="2" fill="#0000ff"/><rect x="409" y="595" width="1" height="2" fill="#0000ff"/><rect x="410" y="595" width="1" height="2" fill="#0000ff"/><rect x="411" y="578" width="1" height="1" fill="#fff"/><rect x="412" y="595" width="1" height="2" fill="#0000ff"/><rect x="416" y="595" width="1" height="2" fill="#0000ff"/><rect x="418" y="578" width="1" height="1" fill="#fff"/><rect x="418" y="595" width="1" height="2" fill="#0000ff"/><rect x="420" y="595" width="1" height="2" fill="#0000ff"/><rect x="421" y="578" width="1" height="1" fill="#fff"/><rect x="421" y="595" width="1" height="2" fill="#0000ff"/><rect x="422" y="578" width="1" height="1" fill="#fff"/><rect x="424" y="578" width="1" height="1" fill="#fff"/><rect x="425" y="595" width="1" height="2" fill="#0000ff"/><rect x="426" y="578" width="1" height="1" fill="#fff"/><rect x="426" y="595" width="1" height="2" fill="#0000ff"/><rect x="427" y="595" width="1" height="2" fill="#0000ff"/><rect x="428" y="578" width="1" height="1" fill="#fff"/><rect x="428" y="595" width="1" height="2" fill="#0000ff"/><rect x="429" y="595" width="1" height="2" fill="#0000ff"/><rect x="430" y="578" width="1" height="1" fill="#fff"/><rect x="431" y="595" width="1" height="2" fill="#0000ff"/><rect x="432" y="595" width="1" height="2" fill="#0000ff"/><rect x="434" y="578" width="1" height="1" fill="#fff"/><rect x="434" y="595" width="1" height="2" fill="#0000ff"/><rect x="436" y="578" width="1" height="1" fill="#fff"/><rect x="436" y="595" width="1" height="2" fill="#0000ff"/><rect x="437" y="595" width="1" height="2" fill="#0000ff"/><rect x="438" y="595" width="1" height="2" fill="#0000ff"/><rect x="440" y="578" width="1" height="1" fill="#fff"/><rect x="441" y="578" width="1" height="1" fill="#fff"/><rect x="443" y="595" width="1" height="2" fill="#0000ff"/><rect x="444" y="578" width="1" height="1" fill="#fff"/><rect x="445" y="578" width="1" height="1" fill="#fff"/><rect x="446" y="578" width="1" height="1" fill="#fff"/><rect x="447" y="595" width="1" height="2" fill="#0000ff"/><rect x="448" y="595" width="1" height="2" fill="#0000ff"/><rect x="450" y="595" width="1" height="2" fill="#0000ff"/><rect x="451" y="578" width="1" height="1" fill="#fff"/><rect x="451" y="595" width="1" height="2" fill="#0000ff"/><rect x="452" y="595" width="1" height="2" fill="#0000ff"/><rect x="453" y="595" width="1" height="2" fill="#0000ff"/><rect x="454" y="595" width="1" height="2" fill="#0000ff"/><rect x="455" y="595" width="1" height="2" fill="#0000ff"/><rect x="456" y="578" width="1" height="1" fill="#fff"/><rect x="456" y="595" width="1" height="2" fill="#0000ff"/><rect x="457" y="578" width="1" height="1" fill="#fff"/><rect x="457" y="595" width="1" height="2" fill="#0000ff"/><rect x="458" y="595" width="1" height="2" fill="#0000ff"/><rect x="461" y="595" width="1" height="2" fill="#0000ff"/><rect x="462" y="595" width="1" height="2" fill="#0000ff"/><rect x="464" y="595" width="1" height="2" fill="#0000ff"/><rect x="466" y="578" width="1" height="1" fill="#fff"/><rect x="468" y="578" width="1" height="1" fill="#fff"/><rect x="468" y="595" width="1" height="2" fill="#0000ff"/><rect x="470" y="595" width="1" height="2" fill="#0000ff"/><rect x="471" y="578" width="1" height="1" fill="#fff"/><rect x="471" y="595" width="1" height="2" fill="#0000ff"/><rect x="472" y="578" width="1" height="1" fill="#fff"/><rect x="472" y="595" width="1" height="2" fill="#0000ff"/><rect x="473" y="595" width="1" height="2" fill="#0000ff"/><rect x="475" y="578" width="1" height="1" fill="#fff"/><rect x="477" y="595" width="1" height="2" fill="#0000ff"/><rect x="478" y="595" width="1" height="2" fill="#0000ff"/><rect x="479" y="578" width="1" height="1" fill="#fff"/><rect x="480" y="595" width="1" height="2" fill="#0000ff"/><rect x="481" y="578" width="1" height="1" fill="#fff"/><rect x="482" y="595" width="1" height="2" fill="#0000ff"/><rect x="483" y="578" width="1" height="1" fill="#fff"/><rect x="483" y="595" width="1" height="2" fill="#0000ff"/><rect x="484" y="595" width="1" height="2" fill="#0000ff"/><rect x="486" y="578" width="1" height="1" fill="#fff"/><rect x="488" y="595" width="1" height="2" fill="#0000ff"/><rect x="489" y="578" width="1" height="1" fill="#fff"/><rect x="493" y="595" width="1" height="2" fill="#0000ff"/><rect x="494" y="595" width="1" height="2" fill="#0000ff"/><rect x="496" y="578" width="1" height="1" fill="#fff"/><rect x="497" y="578" width="1" height="1" fill="#fff"/><rect x="498" y="595" width="1" height="2" fill="#0000ff"/><rect x="501" y="578" width="1" height="1" fill="#fff"/><rect x="501" y="595" width="1" height="2" fill="#0000ff"/><rect x="502" y="595" width="1" height="2" fill="#0000ff"/><rect x="503" y="578" width="1" height="1" fill="#fff"/><rect x="503" y="595" width="1" height="2" fill="#0000ff"/><rect x="504" y="578" width="1" height="1" fill="#fff"/><rect x="505" y="595" width="1" height="2" fill="#0000ff"/><rect x="506" y="578" width="1" height="1" fill="#fff"/><rect x="508" y="595" width="1" height="2" fill="#0000ff"/><rect x="509" y="595" width="1" height="2" fill="#0000ff"/><rect x="510" y="595" width="1" height="2" fill="#0000ff"/><rect x="512" y="595" width="1" height="2" fill="#0000ff"/><rect x="515" y="595" width="1" height="2" fill="#0000ff"/><rect x="516" y="595" width="1" height="2" fill="#0000ff"/><rect x="517" y="578" width="1" height="1" fill="#fff"/><rect x="517" y="595" width="1" height="2" fill="#0000ff"/><rect x="518" y="595" width="1" height="2" fill="#0000ff"/><rect x="519" y="595" width="1" height="2" fill="#0000ff"/><rect x="520" y="578" width="1" height="1" fill="#fff"/><rect x="520" y="595" width="1" height="2" fill="#0000ff"/><rect x="521" y="595" width="1" height="2" fill="#0000ff"/><rect x="522" y="578" width="1" height="1" fill="#fff"/><rect x="522" y="595" width="1" height="2" fill="#0000ff"/><rect x="523" y="578" width="1" height="1" fill="#fff"/><rect x="523" y="595" width="1" height="3" fill="#0000ff"/><rect x="524" y="595" width="1" height="2" fill="#0000ff"/><rect x="526" y="595" width="1" height="2" fill="#0000ff"/><rect x="527" y="595" width="1" height="2" fill="#0000ff"/><rect x="528" y="578" width="1" height="1" fill="#fff"/><rect x="529" y="578" width="1" height="1" fill="#fff"/><rect x="532" y="595" width="1" height="2" fill="#0000ff"/><rect x="533" y="578" width="1" height="1" fill="#fff"/><rect x="533" y="595" width="1" height="2" fill="#0000ff"/><rect x="535" y="595" width="1" height="2" fill="#0000ff"/><rect x="537" y="595" width="1" height="2" fill="#0000ff"/><rect x="539" y="595" width="1" height="2" fill="#0000ff"/><rect x="540" y="578" width="1" height="1" fill="#fff"/><rect x="541" y="595" width="1" height="2" fill="#0000ff"/><rect x="542" y="595" width="1" height="2" fill="#0000ff"/><rect x="543" y="595" width="1" height="2" fill="#0000ff"/><rect x="544" y="578" width="1" height="1" fill="#fff"/><rect x="548" y="595" width="1" height="2" fill="#0000ff"/><rect x="550" y="578" width="1" height="1" fill="#fff"/><rect x="551" y="578" width="1" height="1" fill="#fff"/><rect x="551" y="595" width="1" height="2" fill="#0000ff"/><rect x="552" y="577" width="1" height="2" fill="#0000ff"/><rect x="552" y="595" width="1" height="2" fill="#0000ff"/><rect x="553" y="578" width="1" height="1" fill="#fff"/><rect x="553" y="595" width="1" height="2" fill="#0000ff"/><rect x="554" y="578" width="1" height="1" fill="#fff"/><rect x="555" y="578" width="1" height="1" fill="#fff"/><rect x="557" y="595" width="1" height="2" fill="#0000ff"/><rect x="559" y="595" width="1" height="2" fill="#0000ff"/><rect x="562" y="578" width="1" height="1" fill="#fff"/><rect x="562" y="595" width="1" height="2" fill="#0000ff"/><rect x="564" y="595" width="1" height="2" fill="#0000ff"/><rect x="565" y="578" width="1" height="1" fill="#fff"/><rect x="565" y="595" width="1" height="2" fill="#0000ff"/><rect x="568" y="577" width="1" height="2" fill="#0000ff"/><rect x="570" y="578" width="1" height="1" fill="#fff"/><rect x="571" y="595" width="1" height="2" fill="#0000ff"/><rect x="574" y="595" width="1" height="2" fill="#0000ff"/><rect x="575" y="595" width="1" height="2" fill="#0000ff"/><rect x="576" y="578" width="1" height="1" fill="#fff"/><rect x="577" y="595" width="1" height="2" fill="#0000ff"/><rect x="578" y="595" width="1" height="2" fill="#0000ff"/><rect x="579" y="595" width="1" height="2" fill="#0000ff"/><rect x="581" y="595" width="1" height="2" fill="#0000ff"/><rect x="582" y="578" width="1" height="1" fill="#fff"/><rect x="583" y="595" width="1" height="2" fill="#0000ff"/><rect x="584" y="595" width="1" height="2" fill="#0000ff"/><rect x="585" y="578" width="1" height="1" fill="#fff"/><rect x="587" y="595" width="1" height="2" fill="#0000ff"/><rect x="588" y="595" width="1" height="2" fill="#0000ff"/><rect x="590" y="578" width="1" height="1" fill="#fff"/><rect x="590" y="595" width="1" height="2" fill="#0000ff"/><rect x="591" y="578" width="1" height="1" fill="#fff"/><rect x="591" y="595" width="1" height="2" fill="#0000ff"/><rect x="594" y="578" width="1" height="1" fill="#fff"/><rect x="594" y="595" width="1" height="3" fill="#0000ff"/><rect x="178" y="577" width="1" height="9" fill="#fff"/><rect x="179" y="577" width="1" height="5" fill="#fff"/><rect x="180" y="577" width="1" height="9" fill="#fff"/><rect x="209" y="577" width="1" height="9" fill="#fff"/><rect x="211" y="577" width="1" height="9" fill="#fff"/><rect x="223" y="577" width="1" height="9" fill="#fff"/><rect x="224" y="577" width="1" height="9" fill="#fff"/><rect x="254" y="577" width="1" height="8" fill="#fff"/><rect x="256" y="577" width="1" height="9" fill="#fff"/><rect x="372" y="577" width="1" height="7" fill="#fff"/><rect x="381" y="577" width="1" height="9" fill="#fff"/><rect x="442" y="577" width="1" height="9" fill="#fff"/><rect x="487" y="577" width="1" height="9" fill="#fff"/><rect x="507" y="577" width="1" height="9" fill="#fff"/><rect x="534" y="577" width="1" height="6" fill="#fff"/><rect x="548" y="577" width="1" height="9" fill="#fff"/><rect x="562" y="577" width="1" height="6" fill="#fff"/><rect x="567" y="577" width="1" height="9" fill="#fff"/><rect x="569" y="577" width="1" height="9" fill="#fff"/><rect x="579" y="577" width="1" height="7" fill="#fff"/><rect x="307" y="549" width="1" height="32" fill="#0000ff"/><rect x="312" y="417" width="1" height="164" fill="#0000ff"/><rect x="166" y="416" width="430" height="1" fill="#000"/><rect x="166" y="612" width="430" height="1" fill="#000"/><rect x="166" y="416" width="1" height="197" fill="#000"/><rect x="595" y="416" width="1" height="197" fill="#000"/><rect x="237" y="607" width="1" height="5" fill="#000"/><rect x="237" y="417" width="1" height="4" fill="#000"/><rect x="309" y="607" width="1" height="5" fill="#000"/><rect x="309" y="417" width="1" height="4" fill="#000"/><rect x="380" y="607" width="1" height="5" fill="#000"/><rect x="380" y="417" width="1" height="4" fill="#000"/><rect x="452" y="607" width="1" height="5" fill="#000"/><rect x="452" y="417" width="1" height="4" fill="#000"/><rect x="523" y="607" width="1" height="5" fill="#000"/><rect x="523" y="417" width="1" height="4" fill="#000"/><rect x="167" y="572" width="4" height="1" fill="#000"/><rect x="590" y="572" width="5" height="1" fill="#000"/><rect x="167" y="533" width="4" height="1" fill="#000"/><rect x="590" y="533" width="5" height="1" fill="#000"/><rect x="167" y="494" width="4" height="1" fill="#000"/><rect x="590" y="494" width="5" height="1" fill="#000"/><rect x="167" y="455" width="4" height="1" fill="#000"/><rect x="590" y="455" width="5" height="1" fill="#000"/><rect x="166" y="509" width="1" height="88" fill="#0000ff"/><rect x="730" y="416" width="429" height="197" fill="#fff"/><rect x="730" y="546" width="429" height="1" fill="#0000ff"/><rect x="740" y="482" width="1" height="65" fill="#0000ff"/><rect x="747" y="531" width="1" height="16" fill="#0000ff"/><rect x="751" y="480" width="1" height="67" fill="#0000ff"/><rect x="762" y="519" width="1" height="28" fill="#0000ff"/><rect x="763" y="517" width="1" height="30" fill="#0000ff"/><rect x="766" y="527" width="1" height="20" fill="#0000ff"/><rect x="800" y="538" width="1" height="9" fill="#0000ff"/><rect x="818" y="534" width="1" height="13" fill="#0000ff"/><rect x="831" y="520" width="1" height="27" fill="#0000ff"/><rect x="840" y="527" width="1" height="20" fill="#0000ff"/><rect x="859" y="536" width="1" height="11" fill="#0000ff"/><rect x="863" y="457" width="1" height="90" fill="#0000ff"/><rect x="866" y="516" width="1" height="31" fill="#0000ff"/><rect x="875" y="544" width="1" height="3" fill="#0000ff"/><rect x="883" y="535" width="1" height="12" fill="#0000ff"/><rect x="914" y="533" width="1" height="14" fill="#0000ff"/><rect x="915" y="521" width="1" height="26" fill="#0000ff"/><rect x="922" y="535" width="1" height="12" fill="#0000ff"/><rect x="944" y="531" width="1" height="16" fill="#0000ff"/><rect x="945" y="534" width="1" height="13" fill="#0000ff"/><rect x="959" y="522" width="1" height="25" fill="#0000ff"/><rect x="976" y="538" width="1" height="9" fill="#0000ff"/><rect x="992" y="536" width="1" height="11" fill="#0000ff"/><rect x="995" y="522" width="1" height="25" fill="#0000ff"/><rect x="996" y="534" width="1" height="13" fill="#0000ff"/><rect x="1001" y="526" width="1" height="21" fill="#0000ff"/><rect x="1009" y="534" width="1" height="13" fill="#0000ff"/><rect x="1012" y="529" width="1" height="18" fill="#0000ff"/><rect x="1014" y="523" width="1" height="24" fill="#0000ff"/><rect x="1029" y="461" width="1" height="86" fill="#0000ff"/><rect x="1052" y="540" width="1" height="7" fill="#0000ff"/><rect x="1075" y="535" width="1" height="12" fill="#0000ff"/><rect x="1079" y="458" width="1" height="89" fill="#0000ff"/><rect x="1091" y="471" width="1" height="76" fill="#0000ff"/><rect x="1098" y="520" width="1" height="27" fill="#0000ff"/><rect x="1107" y="508" width="1" height="39" fill="#0000ff"/><rect x="1115" y="541" width="1" height="6" fill="#0000ff"/><rect x="1135" y="521" width="1" height="26" fill="#0000ff"/><rect x="1137" y="520" width="1" height="27" fill="#0000ff"/><rect x="1142" y="453" width="1" height="94" fill="#0000ff"/><rect x="1144" y="540" width="1" height="7" fill="#0000ff"/><rect x="854" y="546" width="1" height="39" fill="#0000ff"/><rect x="1009" y="546" width="1" height="4" fill="#0000ff"/><rect x="730" y="416" width="429" height="1" fill="#000"/><rect x="730" y="612" width="429" height="1" fill="#000"/><rect x="730" y="416" width="1" height="197" fill="#000"/><rect x="1158" y="416" width="1" height="197" fill="#000"/><rect x="801" y="607" width="1" height="5" fill="#000"/><rect x="801" y="417" width="1" height="4" fill="#000"/><rect x="872" y="607" width="1" height="5" fill="#000"/><rect x="872" y="417" width="1" height="4" fill="#000"/><rect x="944" y="607" width="1" height="5" fill="#000"/><rect x="944" y="417" width="1" height="4" fill="#000"/><rect x="1015" y="607" width="1" height="5" fill="#000"/><rect x="1015" y="417" width="1" height="4" fill="#000"/><rect x="1086" y="607" width="1" height="5" fill="#000"/><rect x="1086" y="417" width="1" height="4" fill="#000"/><rect x="731" y="579" width="4" height="1" fill="#000"/><rect x="1153" y="579" width="5" height="1" fill="#000"/><rect x="731" y="546" width="4" height="1" fill="#000"/><rect x="1153" y="546" width="5" height="1" fill="#000"/><rect x="731" y="514" width="4" height="1" fill="#000"/><rect x="1153" y="514" width="5" height="1" fill="#000"/><rect x="731" y="481" width="4" height="1" fill="#000"/><rect x="1153" y="481" width="5" height="1" fill="#000"/><rect x="731" y="448" width="4" height="1" fill="#000"/><rect x="1153" y="448" width="5" height="1" fill="#000"/><rect x="730" y="546" width="1" height="1" fill="#0000ff"/><rect x="1158" y="546" width="1" height="1" fill="#0000ff"/><rect x="166" y="688" width="430" height="197" fill="#fff"/><rect x="166" y="688" width="430" height="1" fill="#000"/><rect x="166" y="884" width="430" height="1" fill="#000"/><rect x="166" y="688" width="1" height="197" fill="#000"/><rect x="595" y="688" width="1" height="197" fill="#000"/><rect x="237" y="879" width="1" height="5" fill="#000"/><rect x="237" y="689" width="1" height="4" fill="#000"/><rect x="309" y="879" width="1" height="5" fill="#000"/><rect x="309" y="689" width="1" height="4" fill="#000"/><rect x="380" y="879" width="1" height="5" fill="#000"/><rect x="380" y="689" width="1" height="4" fill="#000"/><rect x="452" y="879" width="1" height="5" fill="#000"/><rect x="452" y="689" width="1" height="4" fill="#000"/><rect x="523" y="879" width="1" height="5" fill="#000"/><rect x="523" y="689" width="1" height="4" fill="#000"/><rect x="167" y="859" width="4" height="1" fill="#000"/><rect x="590" y="859" width="5" height="1" fill="#000"/><rect x="167" y="835" width="4" height="1" fill="#000"/><rect x="590" y="835" width="5" height="1" fill="#000"/><rect x="167" y="810" width="4" height="1" fill="#000"/><rect x="590" y="810" width="5" height="1" fill="#000"/><rect x="167" y="786" width="4" height="1" fill="#000"/><rect x="590" y="786" width="5" height="1" fill="#000"/><rect x="167" y="761" width="4" height="1" fill="#000"/><rect x="590" y="761" width="5" height="1" fill="#000"/><rect x="167" y="737" width="4" height="1" fill="#000"/><rect x="590" y="737" width="5" height="1" fill="#000"/><rect x="167" y="712" width="4" height="1" fill="#000"/><rect x="590" y="712" width="5" height="1" fill="#000"/><rect x="166" y="737" width="429" height="148" fill="#0000ff"/><rect x="173" y="688" width="1" height="50" fill="#0000ff"/><rect x="190" y="688" width="1" height="50" fill="#0000ff"/><rect x="196" y="688" width="1" height="50" fill="#0000ff"/><rect x="198" y="688" width="1" height="50" fill="#0000ff"/><rect x="209" y="688" width="1" height="50" fill="#0000ff"/><rect x="225" y="688" width="1" height="50" fill="#0000ff"/><rect x="232" y="688" width="1" height="50" fill="#0000ff"/><rect x="233" y="688" width="1" height="50" fill="#0000ff"/><rect x="234" y="688" width="1" height="50" fill="#0000ff"/><rect x="241" y="688" width="1" height="50" fill="#0000ff"/><rect x="267" y="688" width="1" height="50" fill="#0000ff"/><rect x="269" y="688" width="1" height="50" fill="#0000ff"/><rect x="274" y="688" width="1" height="50" fill="#0000ff"/><rect x="277" y="688" width="1" height="50" fill="#0000ff"/><rect x="288" y="688" width="1" height="50" fill="#0000ff"/><rect x="293" y="688" width="1" height="50" fill="#0000ff"/><rect x="304" y="688" width="1" height="50" fill="#0000ff"/><rect x="312" y="688" width="1" height="50" fill="#0000ff"/><rect x="323" y="688" width="1" height="50" fill="#0000ff"/><rect x="350" y="688" width="1" height="50" fill="#0000ff"/><rect x="356" y="688" width="1" height="50" fill="#0000ff"/><rect x="361" y="688" width="1" height="50" fill="#0000ff"/><rect x="375" y="688" width="1" height="50" fill="#0000ff"/><rect x="378" y="688" width="1" height="50" fill="#0000ff"/><rect x="404" y="688" width="1" height="50" fill="#0000ff"/><rect x="418" y="688" width="1" height="50" fill="#0000ff"/><rect x="420" y="688" width="1" height="50" fill="#0000ff"/><rect x="424" y="688" width="1" height="50" fill="#0000ff"/><rect x="428" y="688" width="1" height="50" fill="#0000ff"/><rect x="433" y="688" width="1" height="50" fill="#0000ff"/><rect x="446" y="688" width="1" height="50" fill="#0000ff"/><rect x="459" y="688" width="1" height="50" fill="#0000ff"/><rect x="476" y="688" width="1" height="50" fill="#0000ff"/><rect x="479" y="688" width="1" height="50" fill="#0000ff"/><rect x="483" y="688" width="1" height="50" fill="#0000ff"/><rect x="503" y="688" width="1" height="50" fill="#0000ff"/><rect x="516" y="688" width="1" height="50" fill="#0000ff"/><rect x="519" y="688" width="1" height="50" fill="#0000ff"/><rect x="534" y="688" width="1" height="50" fill="#0000ff"/><rect x="549" y="688" width="1" height="50" fill="#0000ff"/><rect x="554" y="688" width="1" height="50" fill="#0000ff"/><rect x="558" y="688" width="1" height="50" fill="#0000ff"/><rect x="567" y="688" width="1" height="50" fill="#0000ff"/><rect x="573" y="688" width="1" height="50" fill="#0000ff"/><rect x="574" y="688" width="1" height="50" fill="#0000ff"/><rect x="584" y="688" width="1" height="50" fill="#0000ff"/><rect x="585" y="688" width="1" height="50" fill="#0000ff"/><rect x="588" y="688" width="1" height="50" fill="#0000ff"/><rect x="591" y="688" width="1" height="50" fill="#0000ff"/><rect x="592" y="688" width="1" height="50" fill="#0000ff"/><rect x="593" y="688" width="1" height="50" fill="#0000ff"/><rect x="186" y="737" width="1" height="49" fill="#fff"/><rect x="194" y="737" width="1" height="49" fill="#fff"/><rect x="202" y="737" width="1" height="49" fill="#fff"/><rect x="207" y="737" width="1" height="49" fill="#fff"/><rect x="218" y="737" width="1" height="49" fill="#fff"/><rect x="247" y="737" width="1" height="49" fill="#fff"/><rect x="255" y="737" width="1" height="49" fill="#fff"/><rect x="311" y="737" width="1" height="49" fill="#fff"/><rect x="319" y="737" width="1" height="49" fill="#fff"/><rect x="341" y="737" width="1" height="49" fill="#fff"/><rect x="347" y="737" width="1" height="49" fill="#fff"/><rect x="357" y="737" width="1" height="49" fill="#fff"/><rect x="380" y="737" width="1" height="49" fill="#fff"/><rect x="396" y="737" width="1" height="49" fill="#fff"/><rect x="410" y="737" width="1" height="49" fill="#fff"/><rect x="453" y="737" width="1" height="49" fill="#fff"/><rect x="463" y="737" width="1" height="49" fill="#fff"/><rect x="486" y="737" width="1" height="49" fill="#fff"/><rect x="487" y="737" width="1" height="49" fill="#fff"/><rect x="498" y="737" width="1" height="49" fill="#fff"/><rect x="500" y="737" width="1" height="49" fill="#fff"/><rect x="525" y="737" width="1" height="49" fill="#fff"/><rect x="551" y="737" width="1" height="49" fill="#fff"/><rect x="563" y="737" width="1" height="49" fill="#fff"/><rect x="594" y="737" width="1" height="49" fill="#fff"/><rect x="595" y="688" width="1" height="197" fill="#000"/><rect x="594" y="761" width="1" height="1" fill="#000"/><rect x="730" y="688" width="429" height="197" fill="#fff"/><rect x="730" y="688" width="429" height="1" fill="#000"/><rect x="730" y="884" width="429" height="1" fill="#000"/><rect x="730" y="688" width="1" height="197" fill="#000"/><rect x="1158" y="688" width="1" height="197" fill="#000"/><rect x="801" y="879" width="1" height="5" fill="#000"/><rect x="801" y="689" width="1" height="4" fill="#000"/><rect x="872" y="879" width="1" height="5" fill="#000"/><rect x="872" y="689" width="1" height="4" fill="#000"/><rect x="944" y="879" width="1" height="5" fill="#000"/><rect x="944" y="689" width="1" height="4" fill="#000"/><rect x="1015" y="879" width="1" height="5" fill="#000"/><rect x="1015" y="689" width="1" height="4" fill="#000"/><rect x="1086" y="879" width="1" height="5" fill="#000"/><rect x="1086" y="689" width="1" height="4" fill="#000"/><rect x="731" y="835" width="4" height="1" fill="#000"/><rect x="1153" y="835" width="5" height="1" fill="#000"/><rect x="731" y="786" width="4" height="1" fill="#000"/><rect x="1153" y="786" width="5" height="1" fill="#000"/><rect x="731" y="737" width="4" height="1" fill="#000"/><rect x="1153" y="737" width="5" height="1" fill="#000"/><rect x="730" y="786" width="429" height="1" fill="#0000ff"/><rect x="208" y="362" width="1" height="1" fill="#000"/><rect x="214" y="381" width="1" height="1" fill="#000"/><rect x="469" y="381" width="1" height="1" fill="#000"/><rect x="598" y="381" width="1" height="1" fill="#000"/><rect x="720" y="362" width="1" height="1" fill="#000"/><rect x="848" y="362" width="1" height="1" fill="#000"/><rect x="975" y="362" width="1" height="1" fill="#000"/><rect x="1103" y="362" width="1" height="1" fill="#000"/><rect x="725" y="381" width="1" height="1" fill="#000"/><rect x="853" y="381" width="1" height="1" fill="#000"/><rect x="981" y="381" width="1" height="1" fill="#000"/><rect x="1108" y="381" width="1" height="1" fill="#000"/><rect x="208" y="621" width="1" height="1" fill="#000"/><rect x="214" y="640" width="1" height="1" fill="#000"/><rect x="598" y="510" width="1" height="1" fill="#000"/><rect x="721" y="491" width="1" height="1" fill="#000"/><rect x="848" y="621" width="1" height="1" fill="#000"/><rect x="975" y="621" width="1" height="1" fill="#000"/><rect x="1103" y="621" width="1" height="1" fill="#000"/><rect x="853" y="640" width="1" height="1" fill="#000"/><rect x="981" y="640" width="1" height="1" fill="#000"/><rect x="1108" y="640" width="1" height="1" fill="#000"/><rect x="214" y="899" width="1" height="1" fill="#000"/><rect x="341" y="899" width="1" height="1" fill="#000"/><rect x="469" y="899" width="1" height="1" fill="#000"/><rect x="726" y="899" width="1" height="1" fill="#000"/><rect x="853" y="899" width="1" height="1" fill="#000"/><rect x="981" y="899" width="1" height="1" fill="#000"/><rect x="1108" y="899" width="1" height="1" fill="#000"/><rect x="721" y="751" width="1" height="1" fill="#000"/><rect x="726" y="769" width="1" height="1" fill="#000"/><rect x="598" y="853" width="1" height="1" fill="#000"/><g font-family="Liberation Sans, sans-serif" fill="#000" shape-rendering="auto" style="opacity:0.999"><text transform="translate(165.5,354) scale(0.92,1)" text-anchor="middle" font-size="12">0</text><text transform="translate(236.5,354) scale(0.92,1)" text-anchor="middle" font-size="12">1</text><text transform="translate(308.5,354) scale(0.92,1)" text-anchor="middle" font-size="12">2</text><text transform="translate(379.5,354) scale(0.92,1)" text-anchor="middle" font-size="12">3</text><text transform="translate(451.5,354) scale(0.92,1)" text-anchor="middle" font-size="12">4</text><text transform="translate(522.5,354) scale(0.92,1)" text-anchor="middle" font-size="12">5</text><text transform="translate(594.5,354) scale(0.92,1)" text-anchor="middle" font-size="12">6</text><text transform="translate(564.5,381) scale(0.92,1)" text-anchor="start" font-size="12">x</text><text transform="translate(576.4,381) scale(0.92,1)" text-anchor="start" font-size="12">10</text><text transform="translate(594.5,370) scale(0.92,1)" text-anchor="end" font-size="12">4</text><text transform="translate(165.5,627) scale(0.92,1)" text-anchor="middle" font-size="12">0</text><text transform="translate(236.5,627) scale(0.92,1)" text-anchor="middle" font-size="12">1</text><text transform="translate(308.5,627) scale(0.92,1)" text-anchor="middle" font-size="12">2</text><text transform="translate(379.5,627) scale(0.92,1)" text-anchor="middle" font-size="12">3</text><text transform="translate(451.5,627) scale(0.92,1)" text-anchor="middle" font-size="12">4</text><text transform="translate(522.5,627) scale(0.92,1)" text-anchor="middle" font-size="12">5</text><text transform="translate(594.5,627) scale(0.92,1)" text-anchor="middle" font-size="12">6</text><text transform="translate(564.5,654) scale(0.92,1)" text-anchor="start" font-size="12">x</text><text transform="translate(576.4,654) scale(0.92,1)" text-anchor="start" font-size="12">10</text><text transform="translate(594.5,643) scale(0.92,1)" text-anchor="end" font-size="12">4</text><text transform="translate(165.5,899) scale(0.92,1)" text-anchor="middle" font-size="12">0</text><text transform="translate(236.5,899) scale(0.92,1)" text-anchor="middle" font-size="12">1</text><text transform="translate(308.5,899) scale(0.92,1)" text-anchor="middle" font-size="12">2</text><text transform="translate(379.5,899) scale(0.92,1)" text-anchor="middle" font-size="12">3</text><text transform="translate(451.5,899) scale(0.92,1)" text-anchor="middle" font-size="12">4</text><text transform="translate(522.5,899) scale(0.92,1)" text-anchor="middle" font-size="12">5</text><text transform="translate(594.5,899) scale(0.92,1)" text-anchor="middle" font-size="12">6</text><text transform="translate(564.5,926) scale(0.92,1)" text-anchor="start" font-size="12">x</text><text transform="translate(576.4,926) scale(0.92,1)" text-anchor="start" font-size="12">10</text><text transform="translate(594.5,915) scale(0.92,1)" text-anchor="end" font-size="12">4</text><text transform="translate(729.5,354) scale(0.92,1)" text-anchor="middle" font-size="12">0</text><text transform="translate(800.5,354) scale(0.92,1)" text-anchor="middle" font-size="12">1</text><text transform="translate(871.5,354) scale(0.92,1)" text-anchor="middle" font-size="12">2</text><text transform="translate(943.5,354) scale(0.92,1)" text-anchor="middle" font-size="12">3</text><text transform="translate(1014.5,354) scale(0.92,1)" text-anchor="middle" font-size="12">4</text><text transform="translate(1085.5,354) scale(0.92,1)" text-anchor="middle" font-size="12">5</text><text transform="translate(1157.5,354) scale(0.92,1)" text-anchor="middle" font-size="12">6</text><text transform="translate(1127.5,381) scale(0.92,1)" text-anchor="start" font-size="12">x</text><text transform="translate(1139.4,381) scale(0.92,1)" text-anchor="start" font-size="12">10</text><text transform="translate(1157.5,370) scale(0.92,1)" text-anchor="end" font-size="12">4</text><text transform="translate(729.5,627) scale(0.92,1)" text-anchor="middle" font-size="12">0</text><text transform="translate(800.5,627) scale(0.92,1)" text-anchor="middle" font-size="12">1</text><text transform="translate(871.5,627) scale(0.92,1)" text-anchor="middle" font-size="12">2</text><text transform="translate(943.5,627) scale(0.92,1)" text-anchor="middle" font-size="12">3</text><text transform="translate(1014.5,627) scale(0.92,1)" text-anchor="middle" font-size="12">4</text><text transform="translate(1085.5,627) scale(0.92,1)" text-anchor="middle" font-size="12">5</text><text transform="translate(1157.5,627) scale(0.92,1)" text-anchor="middle" font-size="12">6</text><text transform="translate(1127.5,654) scale(0.92,1)" text-anchor="start" font-size="12">x</text><text transform="translate(1139.4,654) scale(0.92,1)" text-anchor="start" font-size="12">10</text><text transform="translate(1157.5,643) scale(0.92,1)" text-anchor="end" font-size="12">4</text><text transform="translate(729.5,899) scale(0.92,1)" text-anchor="middle" font-size="12">0</text><text transform="translate(800.5,899) scale(0.92,1)" text-anchor="middle" font-size="12">1</text><text transform="translate(871.5,899) scale(0.92,1)" text-anchor="middle" font-size="12">2</text><text transform="translate(943.5,899) scale(0.92,1)" text-anchor="middle" font-size="12">3</text><text transform="translate(1014.5,899) scale(0.92,1)" text-anchor="middle" font-size="12">4</text><text transform="translate(1085.5,899) scale(0.92,1)" text-anchor="middle" font-size="12">5</text><text transform="translate(1157.5,899) scale(0.92,1)" text-anchor="middle" font-size="12">6</text><text transform="translate(1127.5,926) scale(0.92,1)" text-anchor="start" font-size="12">x</text><text transform="translate(1139.4,926) scale(0.92,1)" text-anchor="start" font-size="12">10</text><text transform="translate(1157.5,915) scale(0.92,1)" text-anchor="end" font-size="12">4</text><text transform="translate(161.6,344) scale(0.92,1)" text-anchor="end" font-size="12">2</text><text transform="translate(161.6,304) scale(0.92,1)" text-anchor="end" font-size="12">4</text><text transform="translate(161.6,265) scale(0.92,1)" text-anchor="end" font-size="12">6</text><text transform="translate(161.6,226) scale(0.92,1)" text-anchor="end" font-size="12">8</text><text transform="translate(161.6,187) scale(0.92,1)" text-anchor="end" font-size="12">10</text><text transform="translate(161.6,148) scale(0.92,1)" text-anchor="end" font-size="12">12</text><text transform="translate(725.6,344) scale(0.92,1)" text-anchor="end" font-size="12">0</text><text transform="translate(725.6,319) scale(0.92,1)" text-anchor="end" font-size="12">1</text><text transform="translate(725.6,295) scale(0.92,1)" text-anchor="end" font-size="12">2</text><text transform="translate(725.6,270) scale(0.92,1)" text-anchor="end" font-size="12">3</text><text transform="translate(725.6,246) scale(0.92,1)" text-anchor="end" font-size="12">4</text><text transform="translate(725.6,221) scale(0.92,1)" text-anchor="end" font-size="12">5</text><text transform="translate(725.6,197) scale(0.92,1)" text-anchor="end" font-size="12">6</text><text transform="translate(725.6,172) scale(0.92,1)" text-anchor="end" font-size="12">7</text><text transform="translate(725.6,148) scale(0.92,1)" text-anchor="end" font-size="12">8</text><text transform="translate(161.6,617) scale(0.92,1)" text-anchor="end" font-size="12">0</text><text transform="translate(161.6,577) scale(0.92,1)" text-anchor="end" font-size="12" letter-spacing="0.6">0.002</text><text transform="translate(161.6,538) scale(0.92,1)" text-anchor="end" font-size="12" letter-spacing="0.6">0.004</text><text transform="translate(161.6,499) scale(0.92,1)" text-anchor="end" font-size="12" letter-spacing="0.6">0.006</text><text transform="translate(161.6,460) scale(0.92,1)" text-anchor="end" font-size="12" letter-spacing="0.6">0.008</text><text transform="translate(161.6,421) scale(0.92,1)" text-anchor="end" font-size="12" letter-spacing="0.6">0.01</text><text transform="translate(725.6,617) scale(0.92,1)" text-anchor="end" font-size="12">6</text><text transform="translate(725.6,584) scale(0.92,1)" text-anchor="end" font-size="12">7</text><text transform="translate(725.6,551) scale(0.92,1)" text-anchor="end" font-size="12">8</text><text transform="translate(725.6,519) scale(0.92,1)" text-anchor="end" font-size="12">9</text><text transform="translate(725.6,486) scale(0.92,1)" text-anchor="end" font-size="12">10</text><text transform="translate(725.6,453) scale(0.92,1)" text-anchor="end" font-size="12">11</text><text transform="translate(725.6,421) scale(0.92,1)" text-anchor="end" font-size="12">12</text><text transform="translate(161.6,889) scale(0.92,1)" text-anchor="end" font-size="12">0</text><text transform="translate(161.6,864) scale(0.92,1)" text-anchor="end" font-size="12" letter-spacing="0.6">0.5</text><text transform="translate(161.6,840) scale(0.92,1)" text-anchor="end" font-size="12">1</text><text transform="translate(161.6,815) scale(0.92,1)" text-anchor="end" font-size="12" letter-spacing="0.6">1.5</text><text transform="translate(161.6,791) scale(0.92,1)" text-anchor="end" font-size="12">2</text><text transform="translate(161.6,766) scale(0.92,1)" text-anchor="end" font-size="12" letter-spacing="0.6">2.5</text><text transform="translate(161.6,742) scale(0.92,1)" text-anchor="end" font-size="12">3</text><text transform="translate(161.6,717) scale(0.92,1)" text-anchor="end" font-size="12" letter-spacing="0.6">3.5</text><text transform="translate(161.6,693) scale(0.92,1)" text-anchor="end" font-size="12">4</text><text transform="translate(725.6,889) scale(0.92,1)" text-anchor="end" font-size="12">−1</text><text transform="translate(725.6,840) scale(0.92,1)" text-anchor="end" font-size="12" letter-spacing="0.6">−0.5</text><text transform="translate(725.6,791) scale(0.92,1)" text-anchor="end" font-size="12">0</text><text transform="translate(725.6,742) scale(0.92,1)" text-anchor="end" font-size="12" letter-spacing="0.6">0.5</text><text transform="translate(725.6,693) scale(0.92,1)" text-anchor="end" font-size="12">1</text><text transform="translate(165.7,139) scale(0.92,1)" text-anchor="start" font-size="12">x</text><text transform="translate(177.2,139) scale(0.92,1)" text-anchor="start" font-size="12">10</text><text transform="translate(189,128) scale(0.92,1)" text-anchor="start" font-size="12">−4</text><text transform="translate(729.7,139) scale(0.92,1)" text-anchor="start" font-size="12">x</text><text transform="translate(741.2,139) scale(0.92,1)" text-anchor="start" font-size="12">10</text><text transform="translate(753,128) scale(0.92,1)" text-anchor="start" font-size="12">−4</text><text transform="translate(729.7,412) scale(0.92,1)" text-anchor="start" font-size="12">x</text><text transform="translate(741.2,412) scale(0.92,1)" text-anchor="start" font-size="12">10</text><text transform="translate(753,401) scale(0.92,1)" text-anchor="start" font-size="12">−4</text></g></svg>
<div id="titlebar"></div>
<div id="menubar"></div>
<div id="sep1"></div><div id="sep1b"></div>
<div id="toolbar"></div>
<div id="sep2"></div><div id="sep2b"></div>
<svg class="icons" width="1280" height="80" viewBox="0 0 1280 80">
<g style="will-change:transform" font-family="Liberation Sans, sans-serif" fill="#000">
<text x="640.5" y="14" text-anchor="middle" font-size="10.8" letter-spacing="0.55" fill="#1a1a1a">Figure 1</text>
<g font-size="13">
<text x="8" y="36">File</text>
<text x="43" y="36">Edit</text>
<text x="81" y="36">View</text>
<text x="125" y="36">Insert</text>
<text x="174" y="36">Tools</text>
<text x="221" y="36">Desktop</text>
<text x="286" y="36">Window</text>
<text x="347" y="36">Help</text>
</g>
<g shape-rendering="crispEdges" fill="#000">
<rect x="8" y="37" width="7" height="1"/>
<rect x="43" y="37" width="8" height="1"/>
<rect x="81" y="37" width="8" height="1"/>
<rect x="125" y="37" width="3" height="1"/>
<rect x="174" y="37" width="7" height="1"/>
<rect x="221" y="37" width="9" height="1"/>
<rect x="286" y="37" width="11" height="1"/>
<rect x="347" y="37" width="9" height="1"/>
</g>
</g>
<defs>
<linearGradient id="btn" x1="0" y1="0" x2="0" y2="1"><stop offset="0" stop-color="#fbfbfb"/><stop offset="0.55" stop-color="#e6e4e3"/><stop offset="1" stop-color="#c9c6c4"/></linearGradient>
<linearGradient id="page" x1="0" y1="0" x2="1" y2="1"><stop offset="0" stop-color="#ffffff"/><stop offset="1" stop-color="#c9dcf6"/></linearGradient>
<linearGradient id="fold" x1="0" y1="0" x2="0" y2="1"><stop offset="0" stop-color="#fff7b8"/><stop offset="1" stop-color="#f2c84a"/></linearGradient>
<linearGradient id="disk" x1="0" y1="0" x2="1" y2="1"><stop offset="0" stop-color="#6a6ad8"/><stop offset="1" stop-color="#2f2f96"/></linearGradient>
<linearGradient id="cbar" x1="0" y1="0" x2="0" y2="1"><stop offset="0" stop-color="#a08cf0"/><stop offset="0.4" stop-color="#8fe6ea"/><stop offset="0.72" stop-color="#f6ee90"/><stop offset="1" stop-color="#f2a27a"/></linearGradient>
<radialGradient id="lens" cx="0.4" cy="0.35" r="0.7"><stop offset="0" stop-color="#ffffff"/><stop offset="1" stop-color="#bfe6ee"/></radialGradient>
<linearGradient id="hand" x1="0" y1="0" x2="0" y2="1"><stop offset="0" stop-color="#fff4ea"/><stop offset="1" stop-color="#f0c4a0"/></linearGradient>
<linearGradient id="mlogo" x1="0" y1="1" x2="1" y2="0"><stop offset="0" stop-color="#f7d24a"/><stop offset="0.45" stop-color="#e8641e"/><stop offset="1" stop-color="#8c1d12"/></linearGradient>
<linearGradient id="ring" x1="0" y1="0" x2="0" y2="1"><stop offset="0" stop-color="#bdb9b7"/><stop offset="1" stop-color="#7c7877"/></linearGradient>
<linearGradient id="paper" x1="0" y1="0" x2="0" y2="1"><stop offset="0" stop-color="#e2effd"/><stop offset="1" stop-color="#a4c4ee"/></linearGradient>
</defs>
<!-- matlab icon -->
<rect x="2" y="2" width="16" height="16" fill="#000"/>
<path d="M3 10.8 L7.2 8.6 L9.6 10.6 L7 13 Z" fill="#3aa6d0"/>
<path d="M7.2 8.6 L10.4 5.2 L9.6 10.6 Z" fill="#2a7ea6"/>
<path d="M7 13 L9.6 10.6 L10.6 5 Q11.8 2.8 12.8 3.4 Q14.4 6 16.8 13 Q14.8 11.2 13.4 12 Q11.6 13.6 9.2 16 Q8.4 14.2 7 13 Z" fill="url(#mlogo)"/>
<!-- titlebar round button left -->
<circle cx="32.5" cy="9.9" r="7.5" fill="url(#ring)"/>
<circle cx="32.5" cy="9.4" r="6.6" fill="url(#btn)"/>
<rect x="32" y="9" width="1" height="1" fill="#777"/>
<!-- titlebar right buttons -->
<g>
<circle cx="1223.5" cy="9.9" r="7.5" fill="url(#ring)"/><circle cx="1223.5" cy="9.4" r="6.6" fill="url(#btn)"/>
<path d="M1220.2 8 L1223.5 11.2 L1226.8 8" fill="none" stroke="#333" stroke-width="1.5"/>
<circle cx="1246.5" cy="9.9" r="7.5" fill="url(#ring)"/><circle cx="1246.5" cy="9.4" r="6.6" fill="url(#btn)"/>
<path d="M1246.5 6.6 L1249.3 9.4 L1246.5 12.2 L1243.7 9.4 Z" fill="none" stroke="#333" stroke-width="1.4"/>
<circle cx="1269.5" cy="9.9" r="7.5" fill="url(#ring)"/><circle cx="1269.5" cy="9.4" r="6.6" fill="url(#btn)"/>
<path d="M1266.4 6.3 L1272.6 12.3 M1272.6 6.3 L1266.4 12.3" fill="none" stroke="#333" stroke-width="1.5"/>
</g>
<!-- menu arrow on right -->
<path d="M1267 29 L1269 29 L1272 32 L1272 29 L1274 29 L1274 34 L1269 34 L1269 33 L1271 33 L1268 30 L1267 30 Z" fill="#000"/>
<!-- separators -->
<g shape-rendering="crispEdges">
<rect x="99" y="47" width="1" height="24" fill="#808080"/><rect x="100" y="47" width="1" height="24" fill="#fff"/>
<rect x="131" y="47" width="1" height="24" fill="#808080"/><rect x="132" y="47" width="1" height="24" fill="#fff"/>
<rect x="295" y="47" width="1" height="24" fill="#808080"/><rect x="296" y="47" width="1" height="24" fill="#fff"/>
<rect x="327" y="47" width="1" height="24" fill="#808080"/><rect x="328" y="47" width="1" height="24" fill="#fff"/>
<rect x="383" y="47" width="1" height="24" fill="#808080"/><rect x="384" y="47" width="1" height="24" fill="#fff"/>
</g>
<!-- new file -->
<path d="M7.5 51.5 L15.5 51.5 L19.5 55.5 L19.5 65.5 L7.5 65.5 Z" fill="#6b7fb8" transform="translate(0.7,0.7)"/>
<path d="M6.5 50.5 L15 50.5 L19 54.5 L19 64.5 L6.5 64.5 Z" fill="url(#page)" stroke="#8aa0d8" stroke-width="1"/>
<path d="M15 50.5 L15 54.5 L19 54.5 Z" fill="#6f86c8"/>
<g stroke="#e0603a" stroke-width="1"><path d="M7 49.2 V56.8 M3.2 53 H10.8 M4.3 50.3 L9.7 55.7 M9.7 50.3 L4.3 55.7"/></g>
<circle cx="7" cy="53" r="2.2" fill="#ee7a4a"/><circle cx="7" cy="53" r="1" fill="#f6e060"/>
<!-- open folder -->
<path d="M29 65 L29 54.5 Q29 53.5 30 53.5 L34 53.5 L35.5 55.5 L41 55.5 Q42 55.5 42 56.5 L42 65 Z" fill="#e8b830" stroke="#c48f16" stroke-width="1"/>
<path d="M29.2 64.8 L31.6 58.6 L43 58.6 L40.8 64.8 Z" fill="url(#fold)" stroke="#c48f16" stroke-width="1"/>
<path d="M36.5 53 Q39.5 50 42 53.5" fill="none" stroke="#4a74c0" stroke-width="1.3"/>
<path d="M43.2 51.6 L42.6 55.4 L39.8 53.4 Z" fill="#3b62b0"/>
<!-- save -->
<rect x="54.2" y="52.2" width="14" height="14" fill="#5a5a9a" opacity="0.7"/>
<rect x="53.3" y="51.3" width="14" height="14" fill="url(#disk)" stroke="#2a2a86" stroke-width="0.8"/>
<rect x="56" y="52" width="8.2" height="6" fill="#f4f6fb"/>
<path d="M59 52 L64.2 52 L64.2 58 Z" fill="#cfd8ee"/>
<rect x="57.4" y="60.6" width="5.4" height="4" fill="#e8e8f0"/>
<rect x="57.8" y="61" width="2" height="3" fill="#16164a"/>
<!-- print -->
<path d="M79 50 L84.6 50 L86.6 56.2 L80.6 56.2 Z" fill="url(#paper)" stroke="#8aa8d0" stroke-width="0.5"/>
<path d="M77.4 58 L81 55.6 L88 55.6 L91.2 58.6 L85 61.6 Z" fill="#c4c4c4" stroke="#6a6a6a" stroke-width="0.7"/>
<path d="M77.4 58 L85 61.6 L91.2 58.6 L91.2 62 L85 65.8 L77.4 62.2 Z" fill="#8c8c8c" stroke="#5a5a5a" stroke-width="0.7"/>
<path d="M77.8 59.6 L85 63 L90.8 60" fill="none" stroke="#f4f4f4" stroke-width="0.9"/>
<path d="M77.8 61 L85 64.4 L90.8 61.4" fill="none" stroke="#4e4e4e" stroke-width="0.7"/>
<path d="M80.8 56.4 L86.8 56.4 L88.4 58 L79.4 58 Z" fill="#ececec"/>
<path d="M81 57.2 H87.4" stroke="#777" stroke-width="0.7"/>
<rect x="88.4" y="59.4" width="1.2" height="1.2" fill="#3a3"/>
<rect x="83.4" y="63.6" width="1.6" height="1" fill="#4a6ad0"/>
<!-- pointer -->
<path d="M113.5 51.2 L113.5 62.8 L116.2 60.4 L118.2 65 L120 64.2 L118 59.8 L121.4 59.4 Z" fill="#fff" stroke="#000" stroke-width="1" stroke-linejoin="miter"/>
<!-- zoom in -->
<path d="M150.2 60 L154.8 64" stroke="#a8906a" stroke-width="3.6" stroke-linecap="round"/>
<path d="M150.2 59.6 L154.8 63.6" stroke="#f0a040" stroke-width="2.4" stroke-linecap="round"/>
<circle cx="145.4" cy="55.6" r="4.9" fill="url(#lens)" stroke="#9aa0dc" stroke-width="1.3"/>
<path d="M142.8 55.6 H148 M145.4 53 V58.2" stroke="#1e3c8c" stroke-width="1.3"/>
<!-- zoom out -->
<path d="M174.2 60 L178.8 64" stroke="#a8906a" stroke-width="3.6" stroke-linecap="round"/>
<path d="M174.2 59.6 L178.8 63.6" stroke="#f0a040" stroke-width="2.4" stroke-linecap="round"/>
<circle cx="169.4" cy="55.6" r="4.9" fill="url(#lens)" stroke="#9aa0dc" stroke-width="1.3"/>
<path d="M166.8 55.6 H172" stroke="#1e3c8c" stroke-width="1.3"/>
<!-- hand -->
<path d="M194 65.6 L192.6 62.4 L188.6 58.8 Q187.8 57 189.6 57 L192.4 59.2 L191.2 53.2 Q191.6 51.4 193 52.2 L194.4 56.8 L194.6 51.2 Q195.6 49.6 196.8 51 L197.2 56.4 L198.4 51.6 Q199.6 50.4 200.4 51.8 L200 57 L201.6 54.2 Q202.8 53.2 203.4 54.8 L203.2 58.8 Q202.6 62 200.4 65.6 Z" fill="url(#hand)" stroke="#2c5cd0" stroke-width="0.9" stroke-linejoin="round"/>
<path d="M192.4 59.2 L193.4 61 M194.4 56.8 L194.8 59 M197.2 56.4 L197.2 58.6 M200 57 L199.6 59" stroke="#2c5cd0" stroke-width="0.7" fill="none"/>
<!-- rotate -->
<path d="M216.2 52.4 A7 7 0 1 1 213.6 60" fill="none" stroke="#2c4a8e" stroke-width="2.2"/>
<path d="M212 55.8 L218.6 55.4 L214.2 50.2 Z" fill="#2c4a8e"/>
<path d="M217.6 56.4 L220.8 55 L224 56.4 L224 60.4 L220.8 62 L217.6 60.4 Z" fill="#dfe8f6" stroke="#3a5aa0" stroke-width="0.9"/>
<path d="M217.6 56.4 L220.8 58 L224 56.4 M220.8 58 V62" fill="none" stroke="#3a5aa0" stroke-width="0.8"/>
<!-- data cursor -->
<rect x="242.6" y="51.2" width="9" height="9" fill="#8c8c6a" opacity="0.6"/>
<rect x="241.6" y="50.2" width="9" height="9" fill="#f6f3b0" stroke="#a8a040" stroke-width="0.9"/>
<path d="M243.4 52.6 H248.8 M243.4 54.6 H248.8 M243.4 56.6 H248.8" stroke="#b4ac50" stroke-width="0.9"/>
<path d="M236.2 53 Q237 56 239 58.6" fill="none" stroke="#0000ff" stroke-width="1" stroke-dasharray="2 1.2"/>
<path d="M243.4 63 Q247 65 251 65.6" fill="none" stroke="#0000ff" stroke-width="1" stroke-dasharray="2.4 1.2"/>
<path d="M237 61.3 H244.8 M240.9 57.4 V65.2" stroke="#000" stroke-width="1.7"/>
<!-- brush -->
<path d="M274.6 50.8 L266.4 59" stroke="#4450b8" stroke-width="3" stroke-linecap="round"/>
<path d="M274 51 L266.8 58.2" stroke="#d4dcff" stroke-width="1.1"/>
<path d="M265 57.8 L267.8 60.4 Q265.4 64.6 259.4 65.4 Q260.6 60 265 57.8 Z" fill="#5a5a5a" stroke="#333" stroke-width="0.6"/>
<path d="M261 64 Q263.6 62.6 265.6 60" fill="none" stroke="#aaa" stroke-width="0.8"/>
<rect x="268.4" y="59.6" width="6" height="6" fill="#fff"/>
<rect x="269" y="60.2" width="4.8" height="4.8" fill="#ee0010"/>
<path d="M283 57.2 L288 57.2 L285.5 60 Z" fill="#222"/>
<!-- link plots -->
<rect x="306.4" y="50.4" width="10.6" height="8.6" fill="#fff" stroke="#2c4a94" stroke-width="1"/>
<rect x="306" y="50" width="11.4" height="2" fill="#2c4a94"/>
<rect x="304.4" y="53.4" width="10.6" height="8.4" fill="#f0f3fa" stroke="#2c4a94" stroke-width="1"/>
<rect x="304" y="53" width="11.4" height="2" fill="#2c4a94"/>
<ellipse cx="309.4" cy="62.6" rx="3.6" ry="2.6" fill="none" stroke="#6f86b8" stroke-width="1.6"/>
<ellipse cx="316" cy="62.6" rx="3.6" ry="2.6" fill="none" stroke="#6f86b8" stroke-width="1.6"/>
<path d="M309.6 62.6 H316" stroke="#2c4a94" stroke-width="1.4"/>
<path d="M306.2 61.8 Q309.4 59.6 312.4 61.6 M312.8 61.8 Q316 59.6 319.2 61.8" fill="none" stroke="#dfe6f4" stroke-width="0.8"/>
<!-- colorbar -->
<rect x="340.4" y="51.4" width="9.4" height="14.6" fill="#6a7aa0" opacity="0.6"/>
<rect x="339.5" y="50.5" width="9.4" height="14.4" fill="url(#cbar)" stroke="#2c4a94" stroke-width="1"/>
<!-- legend -->
<rect x="361.6" y="51.6" width="14.4" height="14.2" fill="#6a7aa0" opacity="0.6"/>
<rect x="360.7" y="50.6" width="14.2" height="14.2" fill="#fff" stroke="#2c4a94" stroke-width="1.1"/>
<rect x="366.8" y="52" width="7.2" height="11.4" fill="#e8ecf6"/>
<rect x="362.2" y="53" width="4.8" height="4" fill="#e86060"/>
<rect x="362.2" y="59" width="4.8" height="3.8" fill="#6060e8"/>
<rect x="369" y="53.8" width="4" height="1.2" fill="#000"/>
<rect x="369" y="59.8" width="4" height="1.2" fill="#000"/>
<!-- gray stop icon -->
<rect x="395.8" y="53.8" width="10" height="10.2" fill="#8e8e8e"/>
<rect x="395" y="53" width="10" height="10.2" fill="#9a9a9a"/>
<rect x="396.4" y="55.6" width="7.2" height="6.2" fill="#acacac"/>
<!-- dock icon -->
<rect x="417" y="52" width="15" height="14" fill="#6a7aa0" opacity="0.6"/>
<rect x="416.5" y="51.5" width="14.6" height="13.6" fill="#ece9d8" stroke="#24408c" stroke-width="1.2"/>
<rect x="416.5" y="51.5" width="14.6" height="2" fill="#3a5ab0"/>
<rect x="419.8" y="54" width="8" height="7.4" fill="#fff" stroke="#24408c" stroke-width="1.1"/>
<path d="M417.4 62 H430.2" stroke="#24408c" stroke-width="1.1"/>
<rect x="417.4" y="54.2" width="1.6" height="6.6" fill="#fff"/>
<rect x="428.8" y="54.2" width="1.6" height="6.6" fill="#fff"/>

</svg>

</body></html>
